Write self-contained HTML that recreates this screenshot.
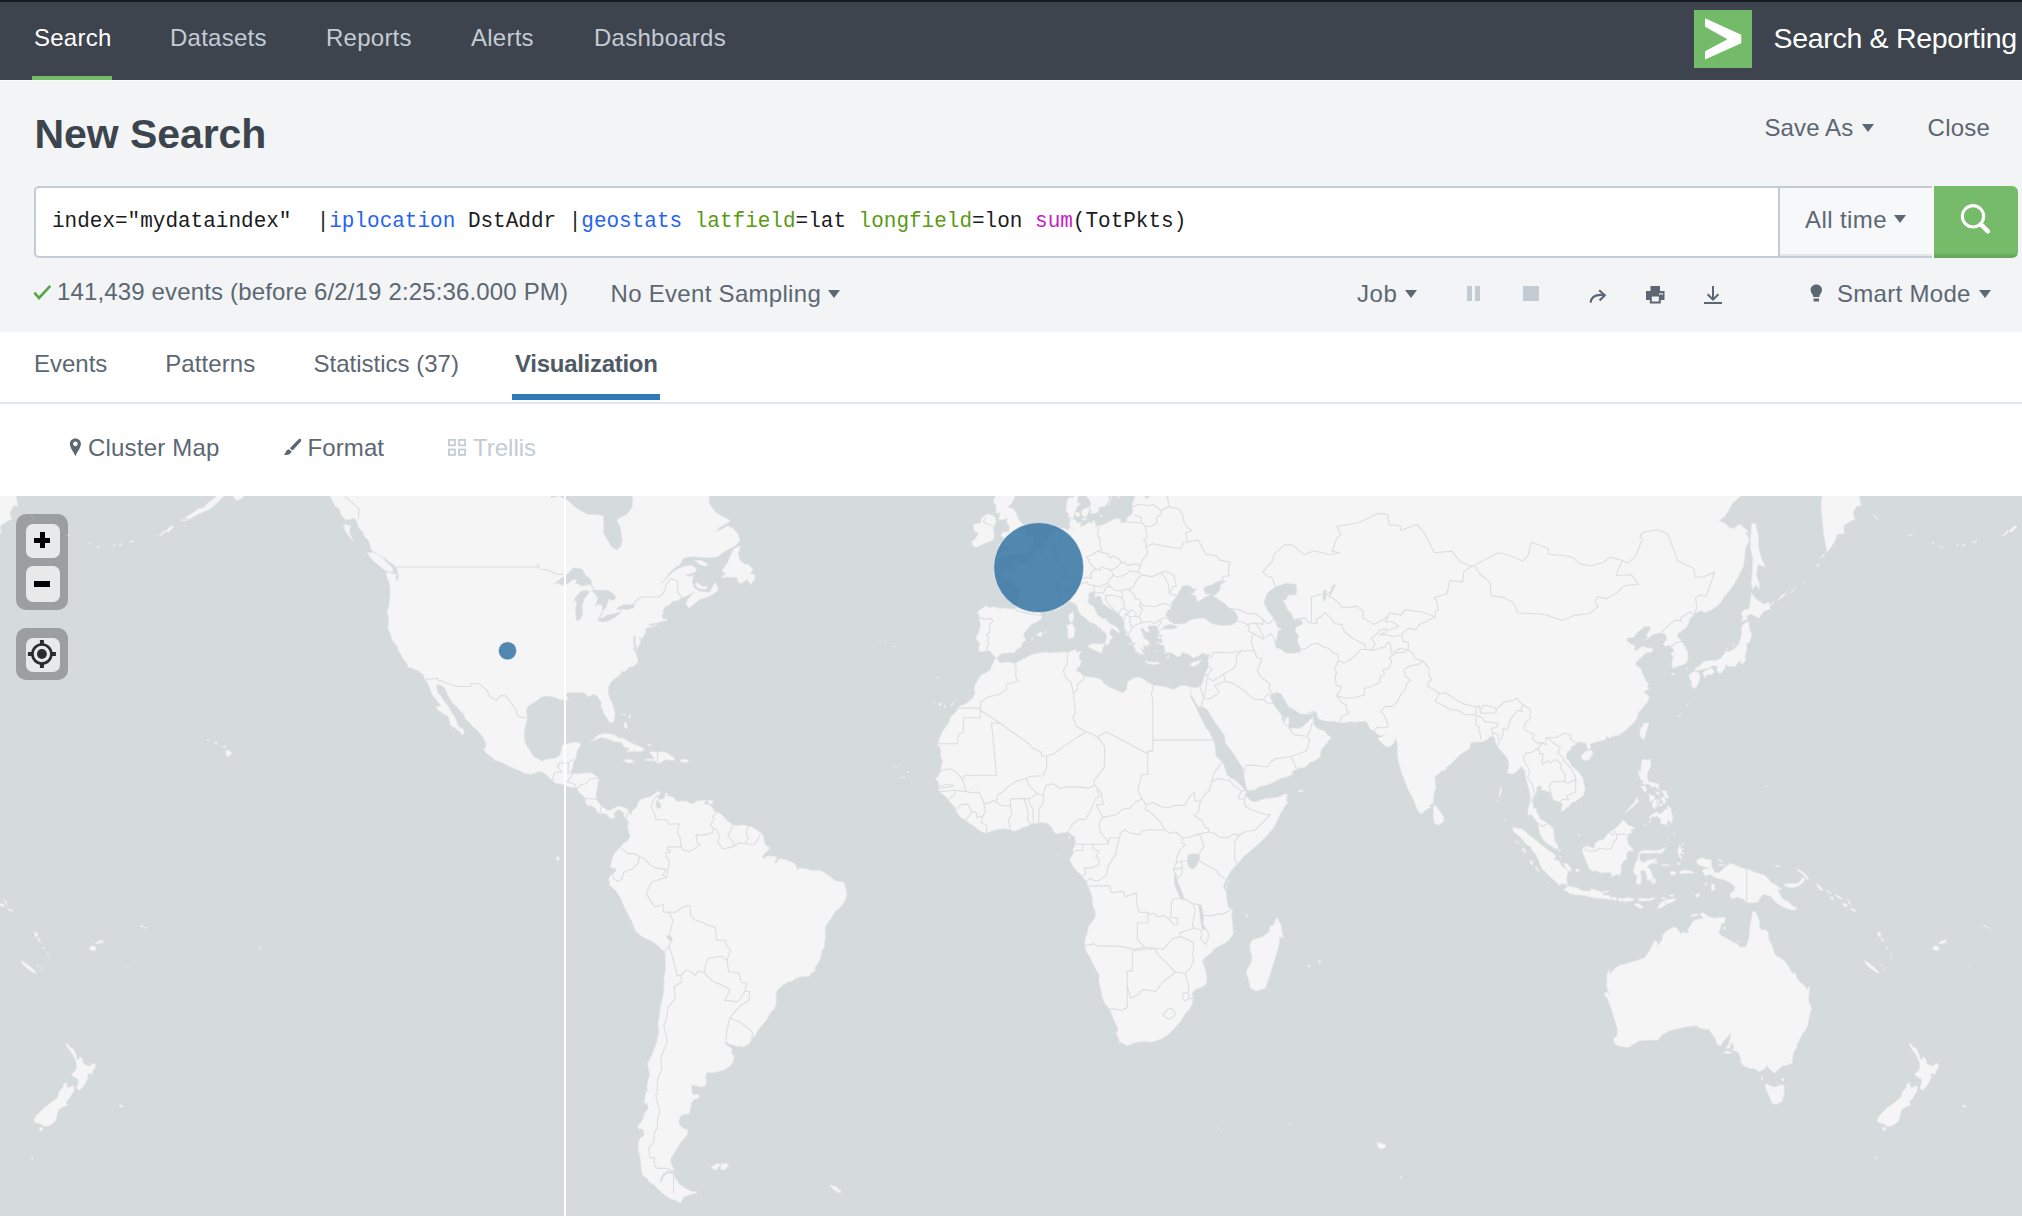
<!DOCTYPE html>
<html><head><meta charset="utf-8"><title>Search | Splunk</title>
<style>
*{box-sizing:border-box;margin:0;padding:0}
html,body{width:2022px;height:1218px;overflow:hidden;background:#fff;font-family:"Liberation Sans",sans-serif;color:#5c6773}
.abs{position:absolute;white-space:nowrap;line-height:1}
#topstrip{position:absolute;left:0;top:0;width:2022px;height:2px;background:#181c21}
#nav{position:absolute;left:0;top:2px;width:2022px;height:78px;background:#3d444d}
.nav{font-size:24px;color:#c3cbd4;top:26px;letter-spacing:.25px}
#hdr{position:absolute;left:0;top:80px;width:2022px;height:252px;background:#f2f4f5}
.t24{font-size:24px;color:#5c6773}
.caret{position:absolute;width:0;height:0;border-left:6.4px solid transparent;border-right:6.4px solid transparent;border-top:8.4px solid #5c6773}
#sbox{position:absolute;left:34px;top:186px;width:1898px;height:72px;border:2px solid #c3cbd4;border-radius:5px 0 0 5px;background:#fff}
#tsel{position:absolute;left:1780px;top:188px;width:152px;height:68px;background:#f7f8fa;box-shadow:inset 0 -2px 0 #e4e7ea}#tgap{position:absolute;left:1932px;top:186px;width:2px;height:72px;background:#f7f8fa}
#tsep{position:absolute;left:1778px;top:188px;width:2px;height:68px;background:#c3cbd4}
#sbtn{position:absolute;left:1934px;top:186px;width:84.3px;height:71.8px;background:linear-gradient(#75bb6a 0,#75bb6a 93%,#67a85e 97%,#67a85e 100%);border-radius:0 6px 6px 0}
#q{font-family:"Liberation Mono",monospace;font-size:21px;left:52px;top:209.5px;color:#1a1c20;transform:scaleY(1.07);transform-origin:0 0}
#q .b{color:#2663f2}#q .g{color:#5b9b14}#q .p{color:#c521c5}
#tabs{position:absolute;left:0;top:332px;width:2022px;height:72px;background:#fff;border-bottom:2px solid #e1e6eb}
#map{position:absolute;left:0;top:496px;width:2022px;height:720px;background:#d5dadd;overflow:hidden}
</style></head><body>
<div id="topstrip"></div>
<div id="nav"></div>
<div class="abs nav" style="left:34px;color:#fff">Search</div>
<div class="abs nav" style="left:170px">Datasets</div>
<div class="abs nav" style="left:326px">Reports</div>
<div class="abs nav" style="left:471px">Alerts</div>
<div class="abs nav" style="left:594px">Dashboards</div>
<div class="abs" style="left:32px;top:76px;width:80px;height:4px;background:#74bb69"></div>
<div class="abs" style="left:1694px;top:10px;width:58px;height:58px;background:#74bb69"></div>
<svg class="abs" style="left:1694px;top:10px" width="58" height="58" viewBox="0 0 58 58"><path d="M11.1 8.3 L47.3 24.8 L47.3 33.3 L11.1 49.6 L11.1 41.3 L33.4 29.2 L11.1 16.8 Z" fill="#fff"/></svg>
<div class="abs" style="left:1773.5px;top:24px;font-size:28.5px;color:#fff;letter-spacing:-.3px" id="appname">Search &amp; Reporting</div>
<div id="hdr"></div><div class="abs" style="left:0;top:80px;width:2022px;height:1px;background:#fbfcfc"></div>
<div class="abs" id="title" style="left:34.6px;top:114.2px;letter-spacing:-.08px;font-size:41px;font-weight:bold;color:#3c444d">New Search</div>
<div class="abs t24" id="saveas" style="left:1764.5px;top:115.6px;letter-spacing:.1px">Save As</div>
<div class="caret" style="left:1861.8px;top:123.6px"></div>
<div class="abs t24" id="close" style="left:1927.6px;top:115.6px;letter-spacing:.2px">Close</div>
<div id="sbox"></div><div id="tsel"></div><div id="tsep"></div><div id="tgap"></div><div id="sbtn"></div>
<div class="abs" id="q">index="mydataindex"&nbsp; |<span class="b">iplocation</span> DstAddr |<span class="b">geostats</span> <span class="g">latfield</span>=lat <span class="g">longfield</span>=lon <span class="p">sum</span>(TotPkts)</div>
<div class="abs t24" id="alltime" style="left:1805px;top:208px;letter-spacing:.4px">All time</div>
<div class="caret" style="left:1894.4px;top:215.4px"></div>
<svg class="abs" style="left:1950px;top:196px" width="52" height="52" viewBox="0 0 52 52"><circle cx="23" cy="20.3" r="10.65" fill="none" stroke="#fff" stroke-width="3.1"/><path d="M31.2 28.6 L37.9 35.4" stroke="#fff" stroke-width="4.5" stroke-linecap="round"/></svg>
<div class="abs t24" id="events" style="left:57px;top:279.6px;letter-spacing:.15px">141,439 events (before 6/2/19 2:25:36.000 PM)</div>
<svg class="abs" style="left:32px;top:282px" width="22" height="22" viewBox="0 0 22 22"><path d="M2.4 10.6 L7 16 L18.3 3.8" fill="none" stroke="#5aa548" stroke-width="2.6"/></svg>
<div class="abs t24" id="sampling" style="left:610.5px;top:282px;letter-spacing:.3px">No Event Sampling</div>
<div class="caret" style="left:828.4px;top:289.8px"></div>
<div class="abs t24" id="job" style="left:1357px;top:282px;letter-spacing:.6px">Job</div>
<div class="caret" style="left:1405px;top:290px"></div>
<div class="abs" style="left:1467px;top:286px;width:5px;height:15px;background:#c3cbd4"></div>
<div class="abs" style="left:1475px;top:286px;width:5px;height:15px;background:#c3cbd4"></div>
<div class="abs" style="left:1523px;top:286px;width:16px;height:15px;background:#c3cbd4"></div>
<svg class="abs" id="ishare" style="left:1588px;top:286px" width="20" height="20" viewBox="0 0 20 20"><path d="M2.6 16.6 C3.2 10.6 7.5 8.2 15.5 9" fill="none" stroke="#5c6773" stroke-width="2.2"/><path d="M11.2 4.2 L16.8 9.2 L11.6 14.6" fill="none" stroke="#5c6773" stroke-width="2.2"/></svg>
<svg class="abs" id="iprint" style="left:1646px;top:286px" width="19" height="18" viewBox="0 0 19 18"><path d="M4.5 0 H14 V5 H18.5 V14 H14.8 V17.6 H3.8 V14 H0 V5 H4.5 Z M5.8 10.6 V15.6 H12.8 V10.6 Z M13.2 7 V8.8 H14.6 V7 Z M15.4 7 V8.8 H16.8 V7 Z" fill="#5c6773" fill-rule="evenodd"/></svg>
<svg class="abs" id="idl" style="left:1703px;top:285px" width="20" height="20" viewBox="0 0 20 20"><path d="M10 1 V14.2 M4.6 9.2 L10 14.6 L15.4 9.2 M1 18 H19" fill="none" stroke="#5c6773" stroke-width="2"/></svg>
<svg class="abs" id="ibulb" style="left:1810px;top:284px" width="13" height="19" viewBox="0 0 13 19"><path d="M6.3 0.4 C9.6 0.4 12 2.8 12 5.9 C12 8.3 10.4 9.6 9.6 11.2 L9.3 13 H3.3 L3 11.2 C2.2 9.6 0.6 8.3 0.6 5.9 C0.6 2.8 3 0.4 6.3 0.4 Z M3.6 14.6 H9 V17.6 H3.6 Z" fill="#5c6773"/></svg>
<div class="abs t24" id="smart" style="left:1837px;top:282px;letter-spacing:.3px">Smart Mode</div>
<div class="caret" style="left:1978.5px;top:290px"></div>
<div id="tabs"></div>
<div class="abs t24" id="tab1" style="left:34px;top:352px">Events</div>
<div class="abs t24" id="tab2" style="left:165.2px;top:352px;letter-spacing:.1px">Patterns</div>
<div class="abs t24" id="tab3" style="left:313.5px;top:352px">Statistics (37)</div>
<div class="abs t24" id="tab4" style="left:515px;top:352px;font-weight:bold;color:#4f5a66;letter-spacing:-.28px">Visualization</div>
<div class="abs" style="left:512px;top:394px;width:148px;height:6px;background:#2d79b9"></div>
<svg class="abs" id="ipin" style="left:69px;top:438px" width="13" height="19" viewBox="0 0 13 19"><path d="M6.4 0.6 C9.6 0.6 11.9 3 11.9 6 C11.9 9.5 8.4 13.5 6.4 18.2 C4.4 13.5 0.9 9.5 0.9 6 C0.9 3 3.2 0.6 6.4 0.6 Z M6.4 3.6 A2.3 2.3 0 1 0 6.41 3.6 Z" fill="#5c6773" fill-rule="evenodd"/></svg>
<div class="abs t24" id="tb1" style="left:88px;top:436px;letter-spacing:.2px">Cluster Map</div>
<svg class="abs" id="ibrush" style="left:283px;top:438px" width="19" height="19" viewBox="0 0 19 19"><path d="M17.6 1 C18.4 1.6 18.4 2.6 17.8 3.4 L9.6 12.6 L6.8 10.2 L15.4 1.4 C16 0.8 17 0.6 17.6 1 Z M5.8 11.2 L8.6 13.6 C8 16.2 5 17.4 0.8 16.8 C2.8 15.6 2.6 12 5.8 11.2 Z" fill="#5c6773"/></svg>
<div class="abs t24" id="tb2" style="left:307.5px;top:436px;letter-spacing:.1px">Format</div>
<svg class="abs" id="itrel" style="left:448px;top:439px" width="18" height="17" viewBox="0 0 18 17"><g fill="none" stroke="#c3cbd4" stroke-width="1.8"><rect x="0.9" y="0.9" width="6" height="5.4"/><rect x="11.1" y="0.9" width="6" height="5.4"/><rect x="0.9" y="10.5" width="6" height="5.4"/><rect x="11.1" y="10.5" width="6" height="5.4"/></g></svg>
<div class="abs t24" id="tb3" style="left:473px;top:436px;color:#c3cbd4">Trellis</div>
<div id="map">
<svg class="abs" style="left:0;top:0" width="2022" height="722" viewBox="0 0 2022 722"><defs><g id="w"><path fill="#f5f5f5" stroke="#e7e9eb" stroke-width="0.8" stroke-linejoin="round" d="M181.0,24.6L189.2,23.2L193.8,20.6L198.9,17.9L204.1,15.6L208.7,13.8L213.8,10.1L218.9,5.0L224.0,-0.1L229.7,-4.9L235.3,-9.8L239.9,-15.7L244.0,-22.7L249.1,-18.6L256.8,-22.7L267.0,-29.8L331.0,-29.8L325.4,-8.8L329.5,-1.1L332.1,4.6L335.1,10.1L339.2,12.9L341.3,19.2L345.4,23.7L350.5,23.2L354.1,21.9L357.2,26.3L358.7,31.6L362.8,35.9L364.8,41.0L368.4,44.3L370.0,49.3L371.5,54.2L375.1,56.7L381.2,59.9L385.3,62.3L388.4,65.5L393.5,68.3L394.5,70.6L396.3,71.0L397.6,75.7L398.6,81.8L396.6,85.6L395.6,81.8L396.6,78.0L393.0,77.6L386.3,75.7L386.8,81.0L389.4,86.7L389.9,91.9L389.9,101.0L388.9,110.4L387.1,116.3L388.9,123.6L387.9,132.8L390.9,138.5L391.5,142.8L395.0,147.7L397.6,150.3L398.1,154.1L400.7,158.0L403.7,163.7L406.8,167.5L408.0,171.5L411.9,171.8L415.0,173.7L418.6,174.6L419.6,175.8L423.2,178.6L424.5,182.3L425.2,183.5L427.8,187.4L430.4,193.7L431.9,198.8L436.5,203.8L440.1,209.0L440.6,210.5L435.6,211.0L439.1,214.8L443.3,217.7L448.3,220.5L449.8,225.6L450.8,229.6L453.9,231.3L460.1,236.0L462.1,239.2L464.2,237.4L463.6,233.5L460.1,231.8L458.0,229.6L456.5,224.5L454.4,220.5L451.4,216.5L449.3,212.5L447.3,209.0L443.7,204.9L441.1,200.2L438.0,196.7L436.8,192.5L437.0,188.0L443.4,190.7L445.7,193.7L447.8,199.0L450.3,203.2L452.9,207.3L457.0,210.7L459.6,214.2L463.6,217.7L465.2,222.8L469.3,226.2L472.4,230.2L477.0,234.1L479.9,237.4L483.1,241.3L485.7,246.6L485.7,251.2L483.6,252.9L486.2,257.2L490.8,260.2L494.9,264.0L501.5,266.2L504.9,267.9L508.7,270.2L513.3,272.1L519.5,274.5L524.1,276.9L530.7,278.5L534.8,277.1L538.4,275.5L543.5,276.6L547.6,279.8L551.7,284.0L556.3,287.6L561.4,288.0L564.9,289.4L570.1,291.1L574.8,291.7L576.8,290.9L577.3,293.0L578.3,295.2L581.4,298.2L585.1,301.6L585.8,304.0L585.1,306.3L587.0,308.9L589.1,310.4L590.6,308.4L591.6,310.2L594.0,311.2L596.3,313.3L596.8,316.2L598.8,316.4L600.5,318.4L602.9,317.0L606.5,318.2L608.5,320.1L610.7,322.6L613.2,322.1L615.2,321.1L613.7,318.0L615.7,315.4L617.8,313.6L620.8,314.1L623.4,317.0L624.9,317.0L623.4,318.5L624.7,321.1L626.0,322.6L628.5,325.7L627.7,331.4L629.0,336.5L630.3,339.7L627.5,345.3L622.9,347.8L621.3,350.4L617.0,354.6L614.9,357.0L612.6,361.5L611.5,364.5L611.1,368.3L610.1,370.9L613.7,372.9L615.7,371.4L616.0,374.5L614.2,376.8L612.9,377.5L610.1,380.1L608.4,383.6L609.6,385.6L609.3,389.3L612.1,391.4L615.7,394.5L618.3,398.6L620.1,401.2L622.4,406.3L624.6,411.4L627.5,417.3L629.8,421.8L632.1,425.7L634.1,431.2L636.2,435.7L640.0,439.1L644.9,442.1L649.5,444.2L652.6,445.9L656.2,448.1L659.5,451.3L662.3,453.9L664.8,455.9L665.4,460.3L665.6,465.2L665.6,470.7L665.4,475.6L663.8,480.9L664.4,484.3L663.8,489.6L663.9,494.1L663.2,499.5L662.2,503.7L660.2,511.8L659.5,520.4L658.0,526.1L658.6,532.1L659.0,536.3L658.1,538.9L657.2,544.9L655.6,549.9L653.6,554.2L652.1,558.7L650.0,562.5L647.7,567.6L648.7,574.1L649.8,578.7L648.0,584.7L646.9,590.1L647.5,594.9L645.9,596.3L644.9,601.8L643.9,606.7L646.9,607.4L648.5,612.4L644.9,616.7L642.8,623.3L637.7,630.7L638.8,632.9L642.8,632.9L644.4,638.9L639.3,642.8L638.2,650.6L639.3,657.7L640.8,665.8L641.3,674.0L642.3,679.1L646.4,681.6L649.5,685.9L654.6,689.4L658.7,693.8L663.8,698.2L670.0,702.7L675.6,704.5L680.4,707.1L683.8,700.9L691.0,698.2L695.6,697.3L697.6,696.0L694.0,695.5L691.0,695.1L684.8,692.0L679.7,688.5L675.6,682.5L673.6,677.8L668.4,677.0L663.8,679.9L661.8,685.1L659.7,686.8L661.3,680.8L663.3,677.8L668.4,674.9L673.6,675.3L674.8,675.1L671.5,669.1L670.5,663.3L674.1,656.9L678.2,650.6L681.8,645.1L687.4,638.6L687.5,633.6L683.3,632.5L679.2,628.8L678.9,624.5L680.7,619.6L685.3,618.2L689.4,617.4L690.5,612.4L691.7,606.0L694.6,603.2L699.0,602.3L698.7,597.5L695.6,599.0L692.5,598.4L691.7,593.5L691.5,588.8L696.1,589.8L701.2,591.2L704.8,590.1L706.6,586.8L705.6,581.4L706.8,576.1L710.9,576.8L717.6,575.8L724.3,573.9L730.2,570.2L733.0,565.7L734.5,559.9L731.9,558.4L731.2,555.5L732.3,553.7L729.9,551.1L727.3,549.6L725.5,548.0L725.3,545.5L726.0,544.6L726.0,544.9L728.6,547.8L733.0,548.9L737.1,550.5L741.2,549.9L743.5,550.9L747.3,548.6L749.4,547.4L751.5,543.4L755.0,539.7L758.2,533.6L762.7,528.5L766.2,524.3L768.1,520.7L770.2,516.8L774.4,512.5L776.0,507.9L776.2,502.7L776.0,498.7L777.0,494.7L779.6,491.9L783.1,489.0L787.7,486.1L792.4,485.1L795.9,482.3L800.0,480.9L803.8,480.5L809.8,480.1L810.9,477.2L814.9,475.1L815.1,470.7L818.0,466.9L821.0,461.4L821.5,455.5L824.1,452.0L824.8,445.0L825.4,440.5L825.0,436.2L825.4,430.4L827.7,426.7L830.8,423.1L833.8,417.8L835.9,414.7L838.9,412.6L841.9,409.3L844.6,405.4L846.3,401.0L846.6,396.3L845.6,392.4L844.6,389.2L844.3,386.8L841.0,385.5L836.9,385.5L833.8,383.7L830.2,380.6L827.6,378.7L823.6,376.0L819.4,374.4L814.9,374.5L811.0,374.5L806.7,372.9L802.1,371.9L799.0,372.4L797.5,374.5L796.4,371.4L794.9,367.8L790.8,365.7L785.4,363.7L781.1,362.7L778.0,363.7L776.5,366.8L774.4,367.3L777.0,361.1L772.4,360.1L766.8,360.1L764.7,362.7L762.1,361.1L763.7,358.6L766.8,355.5L768.8,354.0L769.3,350.9L766.2,349.9L764.2,345.8L763.2,339.6L760.9,337.0L758.6,335.5L756.0,333.5L751.9,331.1L748.3,329.9L742.4,329.1L737.6,329.6L733.0,329.1L730.9,327.3L727.1,324.7L724.8,322.1L721.7,318.5L718.1,316.4L714.5,315.4L712.5,311.8L709.4,308.7L705.8,308.7L703.8,307.1L705.8,304.8L708.0,304.4L703.8,304.2L701.0,304.7L695.7,304.9L696.2,305.8L693.5,307.5L690.5,307.6L686.5,305.1L682.1,305.0L676.6,305.6L675.1,303.5L674.1,301.4L670.0,300.3L667.4,300.3L667.7,297.4L666.4,296.7L665.1,298.8L664.9,301.4L661.3,303.5L658.7,303.2L658.2,305.5L660.8,308.1L660.8,311.8L657.7,312.8L655.6,309.2L656.7,304.0L658.7,302.4L656.7,299.8L659.7,298.5L660.3,296.4L657.8,295.3L655.1,297.2L651.6,300.1L648.5,301.4L644.9,301.4L643.9,303.2L641.8,302.7L639.3,304.8L638.0,306.6L637.5,309.7L636.2,311.3L634.1,313.6L631.6,315.7L631.8,318.8L630.6,318.8L628.8,315.0L626.0,312.3L622.9,311.0L620.3,310.5L617.0,310.5L615.7,311.5L613.2,312.8L610.6,314.1L608.0,314.4L606.0,313.3L603.7,311.5L601.9,310.5L599.7,308.1L597.5,305.5L596.3,303.3L596.0,299.8L596.3,296.1L597.0,292.5L597.9,287.0L599.1,281.9L595.7,280.1L592.7,277.7L589.6,276.7L584.5,277.0L580.4,277.8L576.8,277.7L574.5,277.4L572.7,278.2L570.9,277.4L570.1,276.1L572.4,272.9L573.2,268.6L573.7,265.3L572.7,263.2L575.0,264.3L575.8,261.0L576.8,257.2L577.1,254.0L579.4,251.2L580.6,248.8L579.1,246.3L573.2,246.3L569.1,247.4L565.8,247.9L562.2,249.3L561.7,252.3L561.2,255.9L560.3,258.6L557.3,261.0L554.8,262.4L550.4,262.6L545.6,263.7L541.4,265.1L538.4,262.9L534.8,261.8L532.6,259.4L530.7,255.6L528.2,252.3L526.6,249.6L524.6,245.2L524.1,241.3L524.3,234.1L525.6,228.5L527.4,221.9L526.6,217.1L526.1,213.1L528.7,209.6L533.3,206.7L537.9,204.0L539.9,201.7L544.3,200.2L548.6,199.9L552.7,201.1L556.8,201.7L559.4,203.8L563.0,203.8L566.0,202.9L568.4,204.5L567.1,200.8L565.5,199.0L566.6,197.3L569.6,196.1L574.2,196.7L578.3,196.4L582.4,196.1L586.0,197.9L587.7,200.4L590.6,199.9L593.7,198.0L596.8,199.6L599.6,203.6L601.4,206.7L600.9,210.7L602.4,213.6L603.9,217.7L606.0,220.9L608.5,223.9L609.6,226.7L613.2,226.2L614.5,223.0L615.0,217.7L613.7,212.5L612.4,207.6L610.1,203.2L608.0,196.4L608.5,191.3L610.6,186.5L613.7,183.5L615.7,182.0L619.3,179.2L622.4,175.2L625.7,175.2L628.5,171.2L633.0,170.6L635.7,168.1L638.1,166.5L637.2,161.8L635.9,158.0L635.7,155.7L633.6,154.8L634.1,149.6L633.1,145.1L633.6,140.5L635.7,139.5L635.2,144.4L636.2,149.6L635.8,154.7L638.2,150.3L640.4,146.8L640.4,143.7L638.2,139.8L641.3,142.9L643.8,140.0L645.7,135.8L645.9,132.6L646.4,131.8L652.1,130.8L656.9,128.6L653.1,129.4L648.0,129.7L651.6,127.4L656.2,127.0L658.8,126.5L660.3,125.7L663.3,125.3L666.7,124.4L666.4,122.2L663.8,123.7L663.1,122.6L661.3,119.8L663.3,117.7L662.8,114.6L665.1,110.7L669.0,109.3L672.5,105.4L677.7,104.6L681.8,101.8L686.6,100.0L692.0,97.0L694.6,95.9L692.5,98.1L687.9,103.2L685.9,107.5L688.9,112.1L693.0,108.9L699.3,103.6L705.8,101.8L712.5,98.6L717.6,94.8L718.1,92.3L715.3,86.1L712.5,90.8L709.9,96.3L703.8,95.9L698.7,94.8L694.6,91.9L692.5,87.1L692.0,85.6L693.0,81.0L694.6,78.7L689.4,80.6L684.8,78.3L689.4,78.0L695.6,75.7L696.4,72.9L692.0,69.4L684.3,70.0L679.2,72.2L674.1,75.3L668.7,79.9L663.8,85.6L660.3,87.8L663.3,84.8L666.9,80.6L667.9,78.7L671.5,74.9L675.9,71.0L679.9,69.0L682.3,63.9L684.8,61.5L692.0,60.7L699.2,61.1L708.4,61.7L717.6,60.7L723.7,55.9L732.3,51.6L735.9,49.1L740.1,44.6L738.1,38.4L733.0,32.4L727.8,29.8L720.2,34.1L715.6,35.4L720.2,31.1L725.6,28.2L730.4,25.0L725.3,21.4L721.8,20.3L716.6,17.0L712.5,12.0L708.9,6.9L709.4,-2.0L704.3,-8.8L699.7,-18.6L694.6,-29.8L181.0,-29.8L181.0,-18.6L195.4,-15.7L205.6,-16.6L213.3,-15.7L221.0,-14.7L219.9,-8.8L218.4,-3.0L213.8,2.7L208.2,6.9L203.6,11.5L197.4,13.3L191.8,17.4L185.6,21.0ZM721.2,81.8L727.8,81.0L737.1,81.8L738.6,87.1L742.2,87.1L747.3,83.3L750.4,88.9L755.0,82.5L754.5,78.0L750.4,78.0L752.9,73.3L748.8,68.6L744.2,67.9L739.6,63.9L738.1,58.3L740.6,50.1L734.0,52.6L730.9,58.3L727.8,66.3L721.7,74.9L725.8,77.2ZM694.6,64.3L702.2,64.7L708.4,68.6L705.8,70.2L699.2,68.3ZM695.1,88.5L697.1,86.3L702.2,90.4L707.4,90.4L704.8,93.7L698.1,92.3ZM367.4,56.7L371.5,63.1L377.1,67.9L383.3,73.3L389.9,76.0L393.5,75.7L392.0,71.0L385.8,65.5L381.7,60.7L374.6,56.7ZM343.3,28.5L350.5,29.4L349.5,36.7L353.6,45.2L349.5,41.0L345.4,35.0ZM232.7,-0.1L236.3,4.6L241.4,2.7L245.0,-1.1L245.0,-5.9L241.4,-7.8L236.8,-4.0ZM589.9,244.9L593.2,243.8L598.3,239.1L603.4,237.5L609.1,237.7L613.7,238.5L618.8,241.9L623.9,242.4L629.0,245.7L634.1,248.2L637.7,249.6L641.3,251.2L645.2,253.7L640.8,255.6L634.7,255.2L627.0,255.9L629.5,252.3L624.4,251.2L621.3,246.3L614.2,245.5L609.1,243.3L605.0,241.9L600.4,241.6L595.2,244.1ZM643.6,264.0L648.0,264.8L654.6,264.8L657.7,267.2L660.8,266.4L663.8,264.5L666.9,263.5L673.1,264.8L674.8,262.4L671.5,260.2L666.9,256.7L661.8,255.6L657.7,256.4L652.1,255.3L649.0,256.7L652.6,259.9L654.4,262.9L648.5,262.9ZM623.6,264.5L626.0,263.2L631.1,263.7L634.7,265.9L631.1,266.7L627.0,266.7ZM680.5,264.0L684.8,263.2L688.7,264.3L687.4,266.2L681.0,266.2ZM707.9,307.9L712.5,307.4L712.7,304.0L708.9,304.5ZM624.4,226.5L626.5,226.8L627.5,231.8L626.0,233.0L623.9,229.6ZM620.8,218.5L626.0,217.7L626.0,218.5L620.8,219.1ZM629.0,218.8L630.6,218.8L630.0,222.2L629.0,221.9ZM647.5,248.8L651.0,247.9L650.8,249.6L648.0,249.9ZM225.8,256.4L226.8,253.7L230.7,255.6L232.0,257.8L227.9,260.8L226.3,258.9ZM222.5,250.1L225.1,249.9L226.1,251.2L223.8,251.8ZM214.6,246.6L216.1,245.7L217.4,247.7L215.3,247.9ZM206.9,243.5L208.7,243.0L208.9,244.4L207.6,244.6ZM711.5,670.7L717.6,667.4L720.7,668.2L716.1,674.0L712.5,672.4ZM721.2,667.8L726.3,667.4L729.1,669.1L725.3,673.2L720.7,674.0ZM829.7,689.4L835.4,690.3L841.5,696.0L838.9,696.9L832.8,692.9ZM556.3,361.1L558.4,360.6L559.4,363.7L556.8,364.7ZM1178.4,-29.8L1168.2,-21.1L1160.5,-22.2L1151.5,-21.1L1145.1,-18.6L1145.1,-14.7L1150.2,-10.5L1149.5,-5.9L1149.2,0.8L1146.7,3.0L1143.6,-0.1L1140.5,-4.4L1135.9,-2.5L1134.4,2.7L1132.3,7.4L1132.6,12.0L1132.8,14.7L1131.8,18.3L1127.2,21.4L1126.7,24.1L1124.1,26.8L1121.6,26.8L1120.0,25.9L1121.1,24.1L1119.0,22.8L1114.7,23.0L1109.3,25.4L1104.5,28.2L1097.8,30.5L1095.5,28.5L1094.7,25.4L1093.6,23.8L1091.9,27.2L1088.3,26.3L1086.8,28.2L1083.2,29.8L1080.6,30.3L1081.1,26.8L1076.8,26.8L1076.0,23.7L1073.2,22.8L1074.0,19.2L1074.5,16.5L1076.0,13.8L1077.0,10.6L1080.8,8.1L1077.5,6.4L1077.5,2.7L1078.8,-1.6L1079.1,-4.2L1075.7,-3.0L1072.9,1.3L1068.8,1.6L1066.8,5.5L1066.3,12.0L1066.2,16.1L1068.1,16.8L1069.1,21.9L1070.9,25.7L1068.8,26.8L1070.4,30.7L1073.4,33.3L1069.3,30.9L1068.6,33.7L1066.3,34.0L1065.2,32.0L1060.6,32.9L1061.7,35.4L1060.3,35.6L1056.5,35.0L1052.4,35.4L1049.1,38.9L1048.1,42.9L1045.8,47.0L1042.7,51.0L1041.2,52.4L1039.6,53.2L1036.9,54.7L1034.3,55.3L1032.9,56.1L1033.0,59.1L1032.7,61.5L1030.3,63.7L1025.3,67.1L1023.3,68.6L1019.2,68.0L1018.3,65.5L1016.5,65.9L1014.8,65.3L1016.6,72.3L1017.1,73.9L1014.6,73.7L1011.0,74.5L1009.4,72.2L1004.3,73.2L1000.4,76.2L1002.8,77.2L1000.6,78.5L1002.4,80.3L1007.5,80.9L1008.9,82.7L1012.0,84.0L1013.5,84.3L1014.6,88.5L1015.6,90.0L1018.9,92.6L1019.5,96.5L1021.2,100.3L1019.3,96.9L1018.4,103.6L1017.6,108.2L1016.8,111.9L1014.7,113.0L1009.2,112.7L1005.3,112.0L1000.7,112.5L995.8,111.4L994.8,110.7L988.7,111.4L985.5,109.8L981.8,112.7L977.3,116.1L979.7,120.8L979.6,124.3L980.4,128.0L980.0,131.4L979.4,134.8L976.7,140.1L976.2,143.9L978.2,144.4L977.6,146.2L980.3,146.4L979.4,149.3L978.7,155.3L984.2,155.4L989.2,154.1L992.5,158.4L996.1,161.8L997.4,161.0L1002.2,157.2L1006.8,157.2L1012.2,156.5L1013.6,157.2L1016.6,153.5L1019.8,151.6L1021.2,151.4L1022.3,146.7L1026.0,144.2L1023.2,139.5L1024.8,136.0L1029.3,131.0L1031.2,128.4L1036.0,126.5L1041.2,122.9L1041.8,120.0L1040.3,117.4L1040.7,114.6L1043.7,112.5L1048.4,112.8L1052.3,113.2L1055.2,114.6L1058.8,113.4L1062.0,110.4L1064.6,109.5L1068.2,106.1L1070.5,105.4L1075.1,107.5L1077.5,111.4L1078.7,115.8L1081.6,119.5L1085.1,121.5L1087.4,123.8L1089.4,126.0L1094.3,127.7L1097.8,130.2L1098.2,131.9L1100.4,131.3L1101.6,134.5L1104.7,135.8L1106.9,140.1L1105.8,144.9L1104.9,148.3L1107.0,149.5L1109.7,146.0L1109.9,143.6L1112.9,142.2L1109.4,137.5L1111.3,133.1L1113.0,132.6L1116.9,135.5L1118.9,137.1L1119.5,134.8L1116.7,131.4L1111.2,128.2L1106.3,124.8L1107.6,123.1L1103.1,122.8L1097.6,119.0L1094.0,110.9L1089.2,107.7L1087.7,105.2L1089.1,101.4L1088.0,97.9L1091.9,95.6L1095.3,96.3L1094.2,98.1L1095.7,102.0L1098.0,98.9L1101.1,101.2L1102.7,107.4L1106.2,110.1L1108.9,111.8L1114.0,114.9L1117.5,117.7L1122.6,121.5L1124.4,126.9L1124.5,132.6L1127.2,136.7L1128.6,139.1L1131.0,142.8L1132.8,146.7L1136.1,147.3L1133.0,149.4L1134.0,151.2L1135.8,153.8L1135.9,156.6L1138.0,155.3L1139.9,159.4L1140.4,156.9L1143.6,159.1L1141.5,151.8L1143.4,153.5L1145.1,152.5L1142.6,149.5L1145.8,149.4L1147.8,151.2L1147.7,148.0L1150.5,149.3L1148.4,144.9L1144.1,142.3L1142.3,140.1L1144.1,141.1L1142.0,136.5L1140.5,134.0L1142.2,131.6L1144.6,134.1L1146.4,136.3L1147.7,136.1L1149.7,134.9L1147.2,131.1L1149.8,129.5L1153.8,129.4L1157.3,130.1L1157.9,131.8L1158.9,135.5L1162.0,132.4L1165.6,129.3L1169.2,128.7L1173.2,128.7L1173.8,129.1L1173.3,132.4L1168.2,133.1L1163.0,133.1L1160.0,134.8L1158.3,139.3L1162.8,138.6L1161.4,140.5L1161.8,144.6L1163.7,146.2L1159.5,146.9L1161.5,149.0L1164.3,149.8L1164.4,153.3L1165.2,155.2L1164.9,157.5L1169.5,156.4L1173.8,157.9L1176.5,160.5L1180.4,160.5L1182.0,156.2L1188.6,158.3L1192.9,161.7L1198.6,160.0L1202.1,156.7L1205.9,158.3L1210.0,158.1L1208.9,161.3L1208.0,164.8L1208.5,168.7L1208.2,171.5L1206.6,174.9L1205.0,178.8L1204.0,181.5L1202.8,186.0L1201.2,189.5L1197.9,191.7L1194.3,191.9L1190.2,190.9L1191.5,198.8L1194.3,204.0L1196.9,208.8L1200.2,211.7L1201.5,207.3L1202.3,204.3L1203.8,201.2L1203.6,202.7L1202.7,207.8L1201.8,210.2L1207.6,213.9L1211.4,220.3L1215.6,227.2L1219.6,232.5L1224.6,239.7L1225.4,246.8L1231.0,254.2L1235.1,259.8L1238.8,265.9L1242.7,271.8L1244.2,277.1L1244.7,283.0L1246.2,290.8L1247.3,294.3L1251.1,294.3L1255.4,293.6L1258.8,290.6L1264.9,289.6L1271.5,287.3L1276.3,284.4L1281.8,281.9L1287.1,280.8L1292.2,278.6L1292.1,275.5L1297.2,272.9L1301.8,271.3L1304.9,271.4L1307.9,268.8L1309.2,266.5L1314.1,265.3L1320.8,260.5L1320.2,257.0L1321.8,252.9L1326.4,247.9L1331.0,241.2L1327.9,239.4L1324.8,235.1L1319.7,233.5L1315.4,230.9L1313.3,226.6L1312.9,220.5L1311.5,222.8L1307.8,225.8L1303.2,230.3L1299.2,232.4L1294.8,232.2L1289.0,232.7L1287.5,229.6L1289.0,227.6L1289.0,222.1L1287.0,220.8L1284.7,225.0L1284.6,228.7L1281.8,223.7L1281.4,219.2L1279.0,215.8L1275.2,211.3L1273.1,207.7L1270.5,202.2L1270.3,198.3L1273.1,198.6L1276.1,195.9L1281.7,198.2L1285.0,204.5L1288.5,210.7L1294.1,213.6L1299.7,217.4L1305.8,218.5L1309.5,216.2L1313.0,214.9L1316.6,216.5L1318.2,222.2L1320.6,223.7L1326.9,225.1L1335.2,225.6L1339.7,226.5L1343.9,226.7L1349.8,225.8L1355.7,226.2L1360.7,225.4L1365.8,225.1L1367.8,228.3L1370.4,233.5L1374.0,234.6L1376.5,237.3L1379.9,239.5L1384.7,238.8L1381.7,241.3L1378.4,241.5L1377.9,242.8L1381.2,246.1L1385.1,250.1L1388.2,251.2L1392.4,249.0L1394.5,245.4L1396.0,242.4L1397.0,246.0L1397.3,249.0L1397.7,252.9L1397.3,257.8L1397.6,260.8L1398.6,265.9L1400.1,271.3L1401.1,275.5L1402.7,279.5L1404.3,283.0L1406.2,288.3L1407.9,293.1L1410.3,297.7L1412.7,301.6L1414.2,305.5L1415.2,308.3L1416.5,312.3L1418.7,316.0L1421.9,318.1L1424.9,314.4L1428.8,312.0L1430.8,311.9L1429.3,309.7L1433.6,306.7L1433.6,304.1L1433.5,298.1L1435.9,292.0L1435.2,284.8L1434.9,280.3L1439.0,277.9L1440.3,275.7L1446.2,273.4L1445.9,271.5L1451.3,267.5L1455.4,263.2L1459.6,259.0L1464.2,256.1L1468.6,253.6L1470.2,250.7L1470.5,246.8L1473.1,246.2L1475.9,246.0L1480.5,246.0L1485.6,244.6L1488.2,243.0L1489.7,240.8L1492.8,240.2L1494.8,242.4L1495.7,247.2L1497.4,250.4L1500.4,254.2L1503.8,258.2L1506.1,260.5L1507.9,263.4L1509.0,268.1L1508.1,273.4L1507.1,276.6L1511.2,277.9L1514.8,277.1L1517.9,273.9L1521.4,270.2L1523.0,272.9L1524.6,274.0L1525.7,280.6L1527.1,286.9L1529.6,295.3L1530.4,300.8L1529.4,308.2L1528.1,313.3L1527.8,317.0L1528.1,319.5L1531.2,318.2L1533.7,322.1L1537.1,326.0L1538.6,329.9L1538.6,331.9L1539.9,337.9L1541.9,341.2L1543.7,344.2L1546.0,346.7L1548.3,348.3L1551.8,350.2L1554.7,353.1L1557.8,352.7L1558.7,351.7L1556.5,347.2L1554.5,344.2L1553.8,340.1L1554.2,336.0L1552.8,332.3L1550.1,329.6L1548.3,327.9L1546.1,326.6L1543.2,324.3L1539.9,322.6L1538.3,318.5L1536.8,316.4L1536.3,312.6L1533.5,312.6L1532.6,305.5L1534.2,301.9L1535.8,298.8L1536.5,294.7L1536.8,291.4L1539.9,289.8L1541.8,290.6L1541.3,292.8L1541.4,294.3L1543.4,294.2L1547.6,295.2L1549.6,296.5L1551.6,298.9L1552.7,302.4L1554.7,304.9L1558.2,305.0L1559.7,306.2L1562.8,308.1L1561.6,311.8L1561.0,315.4L1563.9,314.4L1566.1,312.0L1569.1,310.5L1571.4,306.6L1573.0,306.4L1575.7,305.3L1578.3,303.3L1582.9,300.1L1584.0,298.3L1583.9,296.4L1585.2,293.0L1584.1,288.4L1583.4,284.6L1582.4,281.3L1578.9,276.2L1575.7,273.7L1570.7,268.7L1569.6,265.3L1566.2,262.3L1567.0,256.4L1570.6,253.4L1571.4,250.7L1573.2,249.9L1577.8,246.8L1580.8,245.7L1583.5,247.0L1586.5,247.1L1586.7,250.4L1588.8,253.7L1590.6,251.8L1590.0,248.5L1593.1,247.1L1598.1,245.6L1602.3,244.6L1606.2,243.0L1606.4,239.9L1609.5,242.4L1612.6,240.5L1615.5,239.8L1619.2,238.8L1622.3,236.6L1625.9,234.1L1629.5,230.4L1632.5,228.0L1635.6,224.5L1637.4,221.1L1638.2,217.1L1640.7,214.2L1643.6,210.5L1647.4,206.4L1649.2,201.4L1647.4,198.5L1643.8,196.4L1646.1,194.3L1649.3,193.2L1646.9,190.1L1648.9,188.3L1646.4,185.3L1643.8,180.4L1641.8,175.5L1640.7,172.4L1636.4,169.6L1635.6,167.5L1636.9,165.6L1641.0,161.5L1643.8,158.6L1646.9,156.7L1652.0,156.1L1653.0,152.9L1650.1,152.1L1646.4,151.9L1643.0,150.1L1639.2,152.5L1636.6,154.8L1634.1,153.8L1635.4,150.6L1632.0,148.3L1629.0,147.0L1626.9,144.4L1627.7,141.8L1631.0,141.8L1634.1,141.1L1637.2,136.3L1640.7,133.8L1643.8,131.1L1648.9,130.1L1650.5,131.4L1649.7,134.1L1646.4,139.1L1647.9,141.8L1645.3,143.9L1647.4,143.1L1651.0,139.8L1654.6,138.1L1661.5,136.5L1665.8,138.5L1666.8,142.4L1666.3,144.3L1663.0,148.1L1665.8,150.6L1668.4,149.1L1670.9,150.6L1673.0,152.5L1674.0,155.7L1670.7,157.0L1672.5,160.5L1673.5,161.9L1672.0,166.2L1671.9,169.3L1672.5,172.4L1676.1,171.2L1678.9,169.8L1682.2,169.0L1685.6,167.5L1687.3,165.0L1688.1,161.6L1687.4,155.4L1685.0,150.6L1683.2,147.7L1681.2,144.1L1677.3,141.3L1678.1,136.9L1681.2,135.6L1686.3,131.3L1688.9,127.0L1689.4,123.6L1691.9,120.5L1694.0,120.2L1694.5,117.7L1700.1,114.6L1705.2,116.5L1710.4,114.6L1717.5,110.0L1721.1,105.4L1724.2,100.7L1728.8,95.2L1733.2,89.7L1738.0,81.0L1743.1,71.2L1744.4,63.1L1745.6,51.2L1749.3,45.2L1747.7,39.7L1745.2,37.1L1748.8,35.9L1743.1,30.7L1739.0,28.1L1733.9,32.4L1728.8,31.6L1726.2,28.1L1719.1,24.6L1725.2,20.1L1729.3,12.9L1732.2,7.6L1739.0,1.7L1744.2,-4.9L1750.3,-12.7L1757.0,-21.7L1767.2,-29.8ZM1827.6,-29.8L1826.6,-16.6L1823.5,-6.8L1821.5,2.7L1821.2,12.0L1822.0,21.0L1823.0,31.6L1824.0,40.1L1826.1,51.0L1827.0,56.1L1830.7,51.8L1835.3,44.3L1837.1,38.4L1844.3,37.6L1843.5,29.8L1850.1,25.4L1854.8,23.2L1853.2,16.5L1856.8,10.1L1860.9,10.1L1859.9,2.7L1858.3,-4.0L1860.9,-9.8L1864.5,-29.8ZM1751.8,27.2L1755.4,27.2L1758.5,40.1L1758.5,51.0L1761.1,61.5L1765.7,71.0L1758.0,68.6L1756.4,78.7L1759.5,87.8L1759.0,93.0L1755.9,88.5L1752.4,93.7L1751.3,86.3L1752.4,74.9L1752.9,63.1L1750.3,51.0L1750.8,38.4ZM1741.6,125.7L1743.1,120.2L1741.1,118.1L1744.2,113.2L1748.8,113.2L1750.3,106.1L1751.3,97.4L1756.4,103.2L1763.6,108.2L1768.7,106.1L1770.3,112.8L1764.1,115.3L1758.5,122.2L1751.3,118.1L1746.7,119.8L1747.2,123.6L1744.2,124.3ZM1746.2,125.7L1749.0,126.3L1749.3,132.4L1751.8,138.5L1749.8,145.7L1746.7,147.7L1746.5,155.4L1744.7,161.8L1746.0,163.7L1743.6,166.8L1740.8,168.1L1740.6,164.3L1737.5,166.8L1735.7,170.0L1732.4,170.6L1727.8,170.6L1725.7,168.1L1725.5,171.8L1722.7,174.9L1720.1,177.7L1716.5,174.9L1717.5,170.6L1713.4,169.6L1707.3,172.4L1702.2,173.7L1695.5,174.6L1695.0,172.1L1699.6,170.0L1704.2,165.3L1710.9,164.6L1717.5,164.3L1721.1,161.8L1724.7,157.3L1727.8,152.2L1726.2,154.8L1728.3,156.1L1734.4,152.9L1738.5,148.3L1741.1,141.1L1741.6,135.8L1741.1,131.8L1743.1,128.4ZM1702.7,177.4L1705.8,174.3L1711.9,172.1L1714.5,175.5L1711.9,178.6L1706.8,178.3L1705.2,182.0ZM1688.9,179.2L1691.9,176.5L1695.5,175.2L1699.1,176.8L1700.1,181.7L1697.6,189.5L1695.0,192.5L1691.4,190.7L1691.4,185.3L1689.4,182.3ZM1644.3,226.8L1648.9,227.3L1647.1,233.0L1643.8,244.1L1640.2,239.7L1639.7,234.6L1642.8,229.6ZM1581.3,259.4L1586.0,255.1L1591.6,254.5L1593.1,257.2L1589.5,263.2L1585.4,264.8L1581.3,262.6ZM1433.6,309.4L1435.9,310.2L1440.5,315.9L1443.9,321.6L1443.1,326.2L1438.0,329.1L1434.4,327.3L1433.1,321.1L1433.6,315.9ZM999.2,-13.7L1009.4,-13.7L1007.9,-6.8L1004.3,-3.5L1014.6,-4.0L1014.6,1.7L1011.5,7.4L1007.9,11.5L1012.0,12.0L1015.6,15.6L1017.6,21.0L1019.2,24.6L1023.8,28.9L1025.3,33.3L1026.3,37.6L1027.4,38.9L1031.5,39.3L1033.8,42.7L1033.0,46.8L1029.4,50.1L1032.0,52.6L1030.9,54.7L1026.3,57.1L1020.7,57.1L1015.1,58.3L1009.4,57.9L1006.4,61.1L1003.3,60.3L998.7,63.1L995.6,62.5L1001.2,56.7L1003.3,53.4L1009.4,53.4L1011.0,50.1L1004.8,50.6L998.2,48.9L1002.8,45.2L1004.3,41.8L1001.2,39.7L1002.8,35.9L1008.9,35.9L1009.4,30.7L1006.4,25.4L1007.9,21.9L1002.3,23.7L998.7,23.7L1000.2,16.5L996.1,17.4L996.1,9.2L993.1,5.5L995.6,-0.1L996.6,-6.8ZM993.1,19.2L986.9,17.9L981.3,22.8L980.8,27.2L973.6,28.1L974.1,35.0L978.7,37.1L976.2,41.8L971.6,46.0L973.1,50.1L976.2,51.4L982.3,48.5L989.5,45.6L993.1,44.3L994.1,38.4L993.1,31.6L996.1,26.3L995.1,21.9ZM1082.1,-16.6L1085.2,-6.8L1086.2,-0.1L1090.6,5.8L1090.3,9.7L1089.8,11.5L1091.4,15.6L1090.4,17.6L1095.6,17.1L1098.3,16.1L1098.0,12.6L1100.8,10.4L1104.7,10.6L1108.6,5.8L1109.0,0.1L1110.0,-4.4L1114.4,-13.7L1122.1,-24.7L1122.1,-29.8L1081.1,-29.8ZM1050.4,-29.8L1053.0,-19.6L1054.0,-12.7L1059.6,-7.8L1061.2,-6.8L1065.8,-8.3L1070.9,-13.7L1078.6,-19.6L1082.1,-16.6L1081.1,-29.8ZM1081.6,14.7L1085.2,12.4L1089.1,11.0L1089.3,14.7L1087.3,19.2L1085.2,21.4L1081.6,18.3ZM1075.0,16.5L1078.6,16.1L1080.1,18.3L1079.1,21.0L1075.5,20.1ZM1081.1,22.3L1085.7,22.3L1086.8,23.7L1083.2,24.6ZM1100.1,18.8L1102.1,18.8L1102.1,21.0L1100.1,20.6ZM1108.8,9.7L1112.4,-0.6L1111.6,-0.1L1109.0,6.4ZM1117.5,2.7L1121.1,-1.1L1122.6,-6.4L1119.5,-5.4L1118.0,-2.0ZM1136.9,-9.8L1138.5,-12.2L1143.6,-11.7L1142.6,-9.8L1138.5,-7.3ZM1138.0,-15.7L1140.5,-17.6L1142.6,-15.7L1140.5,-13.7ZM1036.8,138.5L1040.7,136.1L1042.5,137.8L1040.7,140.5L1038.1,139.8ZM1044.3,135.5L1046.8,136.1L1046.3,137.1L1044.5,136.5ZM1030.9,142.8L1032.7,141.8L1033.0,143.1L1031.5,143.4ZM1068.8,119.5L1072.9,115.3L1073.7,120.8L1072.4,126.3L1069.9,125.3L1068.8,122.2ZM1066.5,129.7L1071.9,127.4L1075.0,132.4L1074.0,141.1L1070.9,142.4L1067.8,141.8L1067.8,133.8ZM1088.5,149.3L1092.9,147.7L1101.6,148.0L1104.7,147.3L1102.6,152.9L1102.1,157.3L1098.0,155.7L1091.4,152.5L1088.5,151.6ZM1145.4,164.6L1149.2,165.9L1156.9,166.2L1159.5,166.5L1158.4,168.1L1151.3,168.4L1145.6,166.5ZM1190.2,167.8L1193.8,165.9L1201.7,164.0L1198.4,168.1L1193.8,170.6L1190.7,169.6ZM1166.9,160.8L1169.2,158.9L1168.7,161.5L1167.1,162.4ZM1157.4,141.1L1160.0,140.1L1161.0,142.1L1158.4,142.4ZM1157.4,145.4L1158.7,145.7L1158.4,147.7L1157.4,147.3ZM1129.2,147.0L1131.0,147.0L1131.0,148.3L1129.5,148.3ZM1125.4,137.5L1126.9,137.5L1127.7,139.8L1126.4,139.5ZM1154.6,154.5L1155.9,154.5L1155.6,155.7L1154.8,155.7ZM1297.7,295.1L1301.3,294.0L1303.8,294.8L1300.3,296.1ZM1283.1,220.5L1284.1,220.5L1283.9,222.5L1283.4,222.2ZM1307.9,218.2L1312.5,216.2L1313.1,216.8L1309.0,218.5ZM1190.2,190.9L1186.1,189.5L1180.4,189.5L1177.9,191.3L1173.3,193.4L1164.2,190.4L1153.6,189.2L1147.5,186.0L1143.1,182.9L1138.2,181.1L1133.9,182.0L1127.6,185.8L1126.7,190.7L1127.2,193.1L1123.1,196.9L1118.0,194.9L1109.8,191.3L1104.2,187.7L1102.1,184.2L1097.5,182.3L1092.3,181.1L1086.6,180.9L1082.7,179.2L1080.4,176.8L1076.5,175.0L1077.0,172.4L1079.9,169.8L1081.5,165.0L1079.2,162.9L1079.1,159.3L1081.4,154.9L1077.5,156.4L1075.3,153.6L1069.6,155.7L1064.6,156.1L1060.1,156.2L1054.3,156.6L1050.8,157.0L1045.3,156.1L1040.4,156.8L1031.5,158.5L1025.2,162.2L1021.6,163.7L1015.3,167.5L1009.7,166.2L1004.7,166.5L1000.7,166.8L997.7,164.5L997.7,162.4L994.5,163.2L993.3,166.8L990.8,172.6L989.7,174.2L985.8,176.8L981.3,178.9L977.4,184.7L974.8,189.5L974.2,194.7L975.5,196.0L972.7,202.1L966.8,207.3L958.6,210.6L956.2,215.4L950.7,220.9L948.5,227.3L943.1,234.6L941.3,238.5L939.4,242.4L937.5,250.1L939.3,250.1L941.3,256.1L940.3,258.9L942.7,265.5L941.3,271.3L940.3,276.4L937.8,280.8L935.0,283.2L937.9,285.0L939.0,288.3L938.8,291.4L939.0,294.8L941.3,297.7L944.9,299.8L948.0,303.5L950.6,306.6L954.7,310.7L956.9,316.0L958.8,319.0L960.8,321.6L965.9,324.4L969.5,327.3L973.3,329.4L978.6,334.0L985.3,337.2L990.9,335.3L993.7,334.2L999.2,333.2L1004.2,332.7L1009.4,333.5L1014.2,335.3L1015.8,334.5L1020.2,332.9L1023.8,331.1L1027.9,329.9L1030.9,328.2L1037.2,327.0L1042.2,326.6L1047.8,327.3L1050.4,329.9L1052.2,332.2L1053.5,335.5L1055.8,337.6L1059.1,337.3L1061.4,336.9L1065.8,336.3L1068.3,336.0L1070.4,337.6L1071.9,339.1L1074.5,340.6L1075.5,344.6L1074.8,350.1L1072.6,353.6L1074.0,356.5L1072.4,359.1L1069.8,363.3L1072.4,369.3L1075.5,373.4L1079.3,377.2L1082.1,380.1L1085.5,384.2L1087.3,388.1L1088.0,390.6L1090.3,395.0L1091.9,399.9L1092.5,404.8L1092.4,409.3L1095.2,414.9L1095.5,419.4L1094.1,423.3L1091.4,426.7L1088.8,429.9L1087.8,434.1L1087.0,438.4L1085.5,441.5L1084.9,445.8L1085.0,449.3L1086.2,455.7L1089.8,460.7L1092.9,467.4L1096.2,473.8L1099.2,478.9L1098.9,486.2L1100.8,493.6L1102.4,501.3L1105.2,507.9L1109.0,512.7L1111.2,516.3L1113.2,522.5L1115.9,528.5L1118.5,533.2L1116.2,537.7L1118.5,541.2L1119.1,544.4L1119.4,547.1L1121.1,545.5L1121.2,547.3L1123.4,547.5L1127.2,550.1L1132.3,547.4L1138.1,546.0L1144.5,545.2L1151.9,546.1L1155.9,544.7L1162.5,542.4L1167.6,538.9L1172.3,534.5L1176.1,530.5L1180.7,525.2L1183.7,520.0L1186.6,516.0L1189.0,513.7L1191.5,509.8L1193.2,502.4L1191.7,497.4L1193.8,494.7L1197.1,493.0L1202.0,490.7L1205.0,489.0L1206.6,486.8L1206.6,480.7L1205.6,475.1L1204.0,469.6L1202.5,466.3L1203.2,463.2L1207.1,459.8L1211.5,456.4L1214.2,452.8L1220.1,449.4L1225.6,446.7L1229.1,443.8L1233.3,437.5L1233.1,434.9L1232.3,426.6L1231.4,418.1L1232.8,414.6L1230.5,412.5L1228.2,411.1L1227.1,405.5L1226.5,399.7L1225.9,394.6L1223.5,391.9L1223.7,388.8L1225.0,385.6L1227.9,380.4L1230.2,376.1L1234.2,371.2L1237.8,367.8L1242.7,361.5L1248.5,356.5L1257.0,349.2L1263.9,342.7L1269.0,337.0L1273.3,332.2L1276.7,325.7L1279.9,318.6L1283.9,311.8L1288.0,305.9L1286.2,305.5L1287.4,298.6L1284.6,297.9L1280.3,300.3L1276.6,301.5L1271.6,302.0L1265.4,302.4L1260.3,304.2L1255.3,305.9L1251.1,305.0L1247.4,301.1L1245.7,299.8L1243.4,300.1L1246.4,297.9L1245.5,294.6L1243.6,292.5L1239.8,288.3L1234.5,283.6L1230.6,281.9L1226.9,278.7L1225.5,273.9L1222.4,265.9L1218.3,262.6L1215.9,259.9L1215.4,257.1L1215.0,250.1L1213.7,244.6L1212.4,242.9L1208.1,233.5L1206.4,233.5L1203.5,226.9L1200.3,221.1L1198.6,217.4L1196.8,212.5L1194.2,208.1L1192.0,203.8L1190.4,200.2L1191.5,198.8ZM1277.1,421.2L1280.8,428.7L1282.2,436.8L1283.1,440.5L1282.0,442.5L1279.4,439.6L1279.6,443.5L1278.8,449.0L1277.7,454.1L1274.7,463.6L1272.4,470.9L1269.7,479.7L1267.5,486.2L1265.4,492.0L1261.3,493.6L1255.9,495.3L1250.3,492.0L1248.4,482.6L1246.2,476.8L1246.9,473.7L1249.6,469.6L1251.5,465.7L1252.1,460.3L1250.2,453.7L1249.8,449.6L1252.4,443.7L1256.8,442.6L1262.0,441.1L1266.0,438.4L1269.4,435.3L1270.0,430.4L1274.1,428.8L1275.2,424.6ZM1225.5,389.1L1226.3,389.3L1227.3,391.9L1226.3,392.7ZM1227.8,384.7L1228.8,384.7L1228.6,387.3L1227.8,387.0ZM1307.7,469.3L1309.5,469.1L1310.5,470.7L1309.0,471.8ZM1318.4,465.2L1320.2,464.1L1320.7,466.1L1318.7,466.9ZM1246.2,418.4L1247.3,418.4L1247.5,421.0L1246.5,420.7ZM1068.1,340.6L1070.4,340.4L1069.3,343.0ZM1058.1,357.6L1059.4,358.1L1058.3,359.3ZM938.3,208.1L942.1,207.0L940.3,209.9ZM943.9,209.6L946.0,209.6L945.7,211.6L944.2,211.3ZM953.1,206.1L953.9,207.3L951.6,209.9L950.8,209.6ZM954.1,204.0L955.9,203.2L955.7,204.6ZM932.9,205.5L933.9,205.5L933.7,207.3ZM936.5,181.7L939.3,181.7L938.8,182.6ZM892.4,149.9L896.0,150.3L894.2,150.8ZM878.9,145.7L881.4,146.0L879.9,146.5ZM884.8,144.1L886.3,144.4L885.5,144.7ZM903.2,280.6L904.7,281.4L904.2,282.4L902.9,281.6ZM895.3,270.7L896.8,270.5L896.3,271.5ZM907.0,275.5L908.6,275.8L907.8,276.6ZM899.4,282.2L900.4,281.9L900.1,282.7ZM1377.1,645.9L1381.2,647.4L1385.8,649.0L1384.7,652.1L1380.1,652.9L1377.6,650.6ZM1400.1,680.8L1402.7,681.2L1401.1,682.5ZM1289.0,628.0L1290.5,628.4L1289.5,629.2ZM1217.3,631.8L1219.1,632.1L1217.8,632.9ZM1512.7,331.1L1517.3,332.4L1522.2,332.9L1526.6,336.5L1530.1,340.1L1536.0,344.2L1538.8,346.8L1540.9,348.6L1544.2,351.0L1548.6,354.5L1552.2,356.5L1555.7,359.6L1554.7,363.7L1559.3,365.0L1561.9,370.4L1565.5,371.9L1567.8,376.2L1566.8,381.1L1567.0,389.3L1563.9,387.8L1560.1,388.1L1558.8,389.9L1556.8,386.3L1552.2,382.7L1548.3,379.1L1545.0,375.5L1541.9,372.4L1539.9,368.3L1538.6,364.5L1535.8,358.6L1532.2,354.5L1530.6,350.7L1525.5,347.8L1522.5,343.0L1516.9,338.4L1513.2,335.0ZM1563.4,394.5L1567.0,390.4L1567.5,389.9L1571.9,390.9L1577.2,391.7L1580.8,394.0L1583.4,394.8L1590.0,395.3L1591.6,392.7L1594.9,394.0L1598.5,395.0L1602.1,396.6L1604.4,399.4L1608.5,399.1L1610.5,400.7L1611.0,404.6L1605.9,402.8L1600.8,402.8L1593.1,402.0L1588.0,400.2L1582.9,399.2L1580.8,399.1L1575.2,399.1L1570.1,397.6L1566.0,394.8ZM1601.8,395.8L1608.0,395.0L1609.0,395.5L1605.9,396.8L1602.1,396.6ZM1586.2,348.9L1589.8,350.9L1594.1,352.4L1595.2,347.3L1598.8,344.7L1603.5,343.4L1608.4,337.0L1613.1,334.0L1615.6,331.9L1619.1,328.9L1622.6,323.9L1625.4,325.7L1627.4,328.8L1629.5,329.6L1635.1,332.4L1630.5,333.8L1632.0,336.6L1628.4,337.8L1626.9,342.7L1628.4,348.3L1634.0,354.5L1627.9,355.5L1626.4,358.9L1626.7,362.7L1623.0,366.1L1620.8,369.8L1621.3,375.0L1619.7,379.6L1617.7,378.0L1611.8,380.9L1611.3,376.8L1605.9,376.5L1600.8,377.0L1596.7,374.7L1592.6,375.2L1589.0,372.4L1588.0,369.1L1586.0,364.7L1583.9,359.9L1582.4,355.5L1582.9,351.9ZM1664.0,351.9L1665.8,351.2L1662.2,357.3L1654.8,357.0L1646.9,357.3L1640.7,357.0L1639.5,360.6L1639.7,363.7L1643.0,366.8L1645.3,365.7L1647.4,364.2L1652.5,363.4L1656.1,362.7L1656.9,364.5L1651.0,367.8L1647.4,369.8L1651.5,376.0L1652.5,379.9L1654.0,382.4L1651.5,384.2L1647.4,384.2L1646.9,380.4L1644.3,373.9L1640.2,375.0L1641.2,379.1L1641.2,382.9L1640.7,388.3L1636.6,388.1L1636.1,385.9L1637.2,380.1L1634.1,377.5L1633.6,373.3L1635.6,366.3L1637.9,363.4L1638.2,359.6L1639.2,356.0L1643.3,354.2L1648.9,354.2L1656.1,354.7L1661.2,353.5ZM1696.8,364.1L1701.7,361.6L1706.8,363.4L1711.4,364.0L1711.4,369.8L1714.5,376.5L1718.6,376.9L1725.2,370.9L1730.8,367.3L1735.2,369.1L1740.6,371.6L1745.2,372.7L1748.3,373.3L1753.6,375.7L1760.3,377.9L1764.9,379.3L1768.2,382.7L1771.3,386.4L1776.4,389.3L1781.8,393.5L1777.4,394.1L1780.5,399.4L1783.6,403.8L1789.2,406.1L1791.8,409.5L1797.3,412.3L1795.1,414.2L1792.3,414.2L1785.1,412.1L1778.2,408.3L1774.9,405.4L1771.1,400.5L1766.2,398.9L1763.1,398.6L1760.0,401.7L1758.0,405.9L1752.9,406.9L1746.7,406.5L1743.4,403.3L1737.5,401.2L1731.4,402.8L1729.8,397.6L1734.4,395.0L1734.9,390.4L1731.9,388.1L1726.2,384.7L1723.7,383.7L1717.0,382.4L1711.9,379.6L1709.6,378.3L1705.2,380.1L1702.2,374.6L1703.7,373.4L1710.4,371.9L1704.2,370.9L1700.6,369.8L1697.1,367.3ZM1642.3,263.2L1647.6,264.0L1650.2,262.9L1651.0,269.6L1647.4,276.6L1647.4,281.9L1647.6,283.2L1649.4,286.1L1654.6,286.7L1659.2,288.3L1658.4,291.7L1660.2,294.8L1657.6,293.0L1654.0,289.6L1652.5,291.7L1648.9,287.7L1644.6,288.5L1642.3,287.7L1644.1,284.3L1641.8,284.8L1640.5,283.0L1638.7,277.7L1638.2,274.7L1640.7,276.3L1640.7,273.4L1641.2,268.3ZM1649.8,324.2L1650.0,319.5L1654.6,317.2L1656.4,315.4L1658.7,318.0L1660.7,317.5L1663.0,315.9L1664.8,313.3L1667.4,313.3L1667.4,309.2L1670.9,312.3L1671.7,317.5L1673.0,322.1L1670.9,327.3L1668.4,324.2L1668.1,323.2L1666.8,328.8L1668.4,330.9L1665.6,328.3L1660.7,327.8L1660.7,322.6L1657.1,320.6L1656.9,319.5L1654.6,321.3L1652.5,320.1ZM1661.2,294.8L1666.3,294.8L1668.6,302.4L1664.8,301.9L1663.8,298.2ZM1661.5,300.8L1664.8,301.4L1665.8,307.1L1663.5,307.6L1661.7,303.5ZM1651.7,308.4L1654.0,303.5L1657.4,303.7L1655.3,313.1L1652.5,311.3ZM1648.9,298.2L1654.0,300.1L1655.1,301.9L1652.0,304.8L1649.2,305.8L1649.7,301.4ZM1656.1,311.0L1657.9,306.6L1659.9,301.6L1658.9,307.1L1656.9,311.0ZM1658.7,309.7L1660.7,307.4L1662.8,308.1L1661.7,310.0ZM1640.7,290.1L1645.3,290.1L1646.9,294.0L1645.3,296.7L1643.3,294.0ZM1624.9,316.7L1629.0,312.3L1634.1,306.6L1637.2,300.8L1638.4,305.5L1633.1,310.7L1626.9,315.9ZM1655.6,295.1L1659.2,296.7L1659.9,298.5L1656.1,297.7ZM1657.1,412.6L1659.7,407.7L1664.8,404.1L1672.5,402.8L1676.6,402.8L1673.0,405.9L1666.8,407.9L1661.7,411.8ZM1638.2,402.8L1642.3,402.0L1648.4,403.0L1654.0,401.2L1654.6,402.8L1649.4,405.1L1642.8,405.1L1638.4,404.8ZM1622.6,402.8L1626.9,401.5L1630.5,402.2L1635.1,403.0L1633.6,404.6L1628.4,405.4L1623.1,406.1ZM1618.0,402.8L1620.8,401.7L1622.3,403.5L1621.0,405.6L1618.5,404.8ZM1610.8,401.5L1614.6,401.0L1617.2,402.8L1614.6,404.8L1611.6,402.8ZM1634.1,408.2L1638.7,407.4L1643.6,411.1L1640.2,412.6L1635.1,409.8ZM1668.9,398.9L1674.0,398.6L1673.5,400.2L1669.4,400.2ZM1661.2,401.7L1665.3,401.5L1665.3,402.8L1661.7,403.0ZM1695.5,399.1L1699.1,396.6L1699.1,400.2L1696.5,401.7ZM1711.4,387.8L1714.5,388.3L1715.0,393.5L1711.9,395.0ZM1705.2,386.8L1706.5,386.8L1706.3,389.9L1705.0,389.3ZM1677.6,354.5L1679.9,348.6L1680.7,352.9L1684.3,351.9L1680.9,355.2L1684.8,358.1L1680.2,357.6L1682.2,364.0L1679.1,361.1L1678.1,357.6ZM1679.6,375.5L1685.3,373.9L1690.4,374.7L1695.0,377.3L1689.9,377.0L1683.7,377.5L1680.2,377.5ZM1669.9,376.0L1673.5,375.2L1676.1,376.5L1675.0,379.1L1670.9,378.8ZM1676.6,366.8L1680.2,366.8L1680.2,368.3L1677.1,368.3ZM1661.7,368.3L1669.9,368.6L1669.9,369.6L1662.2,369.8ZM1718.6,363.4L1721.6,364.2L1722.7,365.7L1719.6,365.5ZM1718.0,368.0L1725.2,368.6L1725.2,369.3L1718.6,369.1ZM1563.2,367.8L1567.0,367.3L1571.1,372.4L1571.1,375.5L1567.5,374.5L1565.5,370.4ZM1575.7,372.9L1578.8,372.9L1579.3,375.5L1576.2,376.0ZM1522.0,352.4L1524.0,351.9L1526.0,356.3L1524.5,356.8ZM1529.6,364.7L1531.7,364.5L1533.2,368.3L1531.2,368.8ZM1514.8,345.3L1516.3,345.3L1518.9,347.3L1517.9,347.6ZM1534.8,370.4L1536.8,371.4L1539.4,376.0L1537.8,375.5ZM1547.6,386.8L1549.1,387.0L1548.6,387.8ZM1559.3,360.1L1560.9,360.1L1560.9,362.2ZM1558.8,353.7L1560.4,353.5L1560.4,355.2L1559.1,355.0ZM1577.8,339.1L1579.8,338.6L1579.3,340.6ZM1652.5,383.2L1655.6,382.2L1655.6,386.8L1652.5,388.3ZM1651.0,383.7L1652.8,383.4L1652.5,386.8L1651.0,386.8ZM1653.5,366.3L1657.1,365.7L1657.1,367.5L1654.0,367.8ZM1681.2,348.8L1683.5,346.5L1683.7,348.8ZM1666.8,342.2L1668.1,340.9L1667.9,342.4ZM1673.5,339.1L1674.5,336.5L1674.5,339.1ZM1648.4,325.7L1651.0,325.5L1650.5,326.5ZM1643.8,328.8L1646.4,328.8L1645.9,329.3ZM1784.1,388.3L1787.7,387.8L1792.8,387.5L1797.4,387.5L1800.5,384.7L1803.0,380.9L1805.1,382.7L1803.0,386.8L1797.9,390.4L1791.8,391.9L1784.6,389.9ZM1796.6,372.9L1800.5,374.5L1805.1,378.0L1808.7,382.2L1807.6,384.2L1804.1,379.6L1799.5,376.0L1796.9,373.9ZM1775.4,369.8L1779.5,369.8L1779.0,370.9L1775.9,370.9ZM1816.4,387.3L1819.9,389.9L1823.5,394.2L1819.9,394.0L1817.4,390.4ZM1825.6,393.7L1828.6,395.0L1831.7,397.6L1828.6,397.1ZM1829.7,400.7L1832.7,401.2L1833.8,403.8L1830.7,402.8ZM1834.8,398.1L1838.9,400.2L1843.5,403.3L1839.9,402.8L1836.3,400.4ZM1842.0,407.4L1846.0,407.7L1848.4,410.3L1844.0,410.3ZM1846.8,402.5L1849.1,404.8L1851.2,409.5L1848.6,406.9ZM1850.7,412.4L1854.2,413.4L1856.3,415.5L1852.2,414.7ZM1877.5,435.7L1880.4,437.0L1881.1,440.5L1878.3,440.5ZM1880.9,442.1L1882.4,442.6L1883.9,445.5L1881.9,445.5ZM1885.7,451.2L1887.8,451.2L1887.5,452.5L1886.0,452.5ZM1890.1,456.8L1891.6,457.1L1891.1,458.7ZM1891.4,460.6L1892.6,461.4L1891.9,462.2ZM1864.2,464.4L1868.6,466.9L1874.2,471.3L1879.8,476.8L1876.8,476.8L1871.1,472.9L1866.0,468.5ZM1880.4,468.2L1881.9,469.1L1881.4,470.4ZM1883.9,471.8L1885.5,472.1L1884.7,473.2ZM1932.3,452.0L1934.6,449.8L1938.2,450.1L1939.7,453.0L1937.2,454.9L1933.1,454.1ZM1938.7,446.9L1942.8,444.5L1946.4,443.7L1945.9,445.8L1942.3,447.7L1939.2,447.9ZM1945.6,446.6L1946.7,446.9L1946.1,447.9ZM140.1,429.6L142.6,429.1L143.1,430.7L141.1,430.9ZM143.9,431.2L146.7,431.5L147.0,432.3L144.4,432.0ZM127.0,470.2L128.5,470.2L128.3,471.0ZM258.8,450.9L260.4,450.9L261.2,452.5L259.4,452.2ZM1754.6,414.7L1752.4,416.3L1751.1,424.9L1749.8,431.5L1749.3,437.3L1748.8,442.6L1746.0,450.6L1740.6,451.2L1736.5,447.4L1731.4,445.3L1726.2,442.1L1721.1,439.4L1718.6,436.8L1720.6,432.5L1721.1,428.3L1724.2,426.7L1725.7,423.1L1724.2,421.0L1720.6,421.5L1716.0,422.0L1711.9,421.8L1707.8,419.9L1703.7,416.8L1699.6,417.8L1703.7,422.5L1700.1,422.8L1694.8,423.9L1691.9,426.7L1690.4,429.4L1687.8,433.3L1688.4,436.8L1685.3,436.8L1682.2,436.2L1680.7,438.4L1679.1,434.6L1674.8,430.7L1669.9,433.1L1665.8,435.2L1662.8,438.9L1661.7,444.2L1657.9,449.6L1657.1,445.8L1654.2,444.7L1650.6,453.0L1648.4,456.0L1644.3,462.0L1638.2,464.1L1632.0,465.8L1624.9,468.0L1618.7,469.6L1614.1,473.2L1610.0,477.9L1609.2,474.0L1606.9,478.4L1606.9,484.0L1606.7,491.3L1609.5,498.7L1606.4,495.8L1604.1,498.4L1608.0,503.3L1609.2,507.3L1611.6,513.6L1613.6,520.7L1615.6,526.7L1617.4,532.4L1617.2,535.7L1616.8,540.8L1613.6,542.0L1614.3,547.2L1618.7,550.2L1628.4,551.4L1634.1,548.0L1639.7,544.6L1648.9,544.1L1657.1,544.3L1659.2,542.4L1662.2,538.8L1669.9,534.5L1677.6,532.7L1684.8,530.9L1690.4,530.3L1696.3,529.7L1700.6,532.7L1709.1,533.6L1711.9,537.5L1715.5,542.7L1717.0,548.0L1720.5,550.2L1723.7,544.9L1729.3,538.9L1730.2,535.7L1730.8,540.0L1729.3,544.5L1728.5,548.0L1725.7,553.0L1730.1,552.1L1730.8,548.6L1731.9,546.4L1733.9,550.5L1731.9,554.9L1734.4,554.6L1738.5,556.8L1740.8,562.7L1740.3,564.9L1743.1,569.6L1745.2,570.5L1749.8,572.5L1754.4,572.8L1759.5,575.8L1765.4,572.2L1766.9,569.3L1768.7,572.2L1771.8,574.8L1774.4,577.6L1777.4,574.1L1782.6,569.6L1787.7,568.9L1792.6,567.0L1792.3,564.2L1793.8,555.5L1796.9,551.7L1797.4,547.5L1799.5,544.0L1802.0,538.3L1805.6,533.9L1807.8,529.3L1808.9,522.5L1811.4,512.7L1810.4,509.0L1808.9,505.6L1808.7,501.3L1809.7,491.9L1809.2,490.2L1807.4,493.6L1805.1,490.5L1799.5,485.4L1796.6,481.4L1795.4,477.3L1791.8,476.8L1788.7,470.4L1783.8,464.1L1776.5,460.1L1773.9,456.0L1772.6,450.6L1771.2,447.5L1769.5,445.3L1768.5,439.8L1768.7,437.0L1764.6,433.1L1761.6,434.6L1759.5,430.9L1759.5,425.7L1758.0,421.5L1756.2,417.3ZM1765.7,588.1L1768.7,589.1L1774.1,591.3L1777.4,590.1L1782.3,588.4L1784.1,590.1L1784.1,598.4L1782.6,603.2L1782.3,605.3L1776.7,608.3L1772.6,607.8L1771.8,606.0L1768.7,599.0L1768.2,598.4L1765.7,591.5ZM1723.9,555.8L1727.8,554.9L1731.9,556.5L1728.8,557.7L1724.2,557.4ZM1692.4,418.4L1697.1,417.6L1698.1,419.4L1693.5,420.4ZM1690.4,418.9L1692.4,418.4L1692.4,420.7L1690.9,420.4ZM1723.2,431.2L1725.7,430.9L1725.2,433.3L1723.4,433.1ZM1737.5,445.3L1740.1,445.0L1739.6,446.3ZM1781.5,582.1L1784.1,582.7L1783.6,585.4L1782.0,584.7ZM1761.3,581.1L1762.6,581.4L1762.6,584.1L1761.3,583.7ZM1909.0,547.5L1910.6,547.4L1913.1,551.1L1916.2,552.4L1918.2,556.5L1919.8,559.9L1919.8,562.8L1922.3,563.8L1922.8,560.6L1925.4,562.5L1926.9,568.0L1932.6,570.2L1936.2,567.3L1939.0,568.3L1938.0,572.8L1936.2,574.8L1935.6,578.1L1931.0,577.8L1930.5,580.1L1931.6,581.1L1929.0,586.8L1925.9,591.2L1922.3,594.2L1919.8,592.2L1920.8,589.1L1921.8,585.4L1921.1,583.1L1917.2,580.7L1914.4,578.6L1915.9,577.1L1918.8,574.8L1919.8,570.7L1919.8,567.0L1918.5,564.1L1916.7,559.9L1914.7,556.8L1912.6,554.2L1911.1,552.1L1910.0,549.9ZM1909.0,586.8L1910.8,587.1L1909.5,588.8L1910.6,590.8L1912.1,592.0L1914.7,590.1L1917.2,590.1L1917.1,595.1L1914.1,599.9L1912.1,603.2L1909.3,606.0L1911.1,609.6L1907.0,610.3L1901.6,613.8L1900.3,618.9L1899.0,624.4L1894.2,628.8L1890.1,630.3L1886.8,630.1L1882.4,627.3L1877.8,626.6L1877.0,624.0L1879.3,619.6L1883.9,615.3L1888.0,611.0L1890.1,609.9L1895.2,606.0L1900.1,602.0L1901.3,600.1L1902.6,595.3L1906.0,591.8L1906.5,588.4ZM1882.4,631.8L1886.0,631.4L1885.5,634.4L1882.9,634.8ZM119.3,609.2L122.7,609.2L122.1,611.7L120.1,611.0ZM1874.7,660.5L1876.3,660.5L1875.7,663.3ZM180.5,24.6L185.1,21.4L189.2,23.2L186.1,25.0ZM165.2,35.9L170.8,29.8L173.9,30.7L168.7,35.9ZM159.5,39.7L164.6,34.1L165.4,35.9L160.5,40.1ZM128.8,46.8L133.4,43.9L133.9,45.6ZM118.6,49.3L121.1,47.3L121.6,49.3ZM112.9,49.3L115.0,47.7L115.0,49.7ZM1939.2,50.1L1943.3,51.8L1942.8,52.6ZM1932.1,47.3L1934.1,46.0L1933.9,48.1ZM1908.0,38.9L1912.6,38.4L1912.1,40.1ZM1873.2,17.9L1876.3,21.0L1877.8,23.7L1874.7,21.0ZM1776.9,105.0L1782.0,98.9L1786.7,97.4L1780.0,103.2ZM1769.2,109.3L1774.9,105.0L1771.8,109.3ZM1790.2,96.7L1795.4,92.3L1793.8,94.8ZM1803.0,87.1L1804.6,85.2L1804.1,87.1ZM1815.8,70.2L1819.4,67.1L1817.9,70.2ZM1819.9,62.3L1824.5,57.1L1824.0,59.9ZM1678.4,221.1L1680.2,218.8L1681.7,216.8L1679.9,219.7ZM1686.3,208.7L1688.9,207.3L1687.3,209.3ZM1686.3,173.7L1687.8,170.3L1687.1,173.1ZM1670.7,178.6L1673.0,177.1L1674.8,177.7L1673.0,179.2ZM1732.4,150.3L1734.2,147.0L1733.9,149.9ZM1498.9,300.3L1500.7,289.8L1501.5,294.6L1499.9,300.3ZM1497.9,305.5L1498.9,303.5L1498.9,305.5ZM1504.5,324.7L1505.8,322.6L1505.6,324.7ZM1765.2,290.9L1766.9,289.3L1766.2,291.1Z"/><path fill="none" stroke="#dcdddf" stroke-width="1.1" stroke-linejoin="round" d="M396.3,71.0L537.6,71.0L537.6,68.0L540.4,73.3L548.6,74.1L556.3,78.3L564.0,78.0L566.0,78.7M634.1,106.8L639.3,102.1L642.3,101.0L658.7,101.0L662.3,98.1L664.9,94.5L666.4,88.5L670.5,82.9L675.1,83.7L677.7,85.9L677.7,95.9L679.7,98.9L681.8,101.8M602.4,98.9L602.9,114.9L600.4,120.2L599.3,121.5M620.3,113.5L620.8,116.3M591.9,90.4L595.2,94.1M358.2,23.2L359.2,12.9L351.5,6.4L346.4,1.7L341.8,-6.8L333.6,-21.7M425.2,183.5L437.5,182.3L437.0,183.5L456.5,190.5L470.8,190.5L470.8,187.8L479.5,187.8L487.2,194.6L489.8,200.5L496.4,204.3L500.5,199.6L505.6,199.8L510.8,206.7L515.4,213.1L517.4,219.4L522.0,221.4L527.4,221.9M552.7,284.3L553.0,280.6L555.3,276.2L561.7,276.2L556.8,269.9L558.9,269.9L558.9,266.9L568.4,266.9L572.7,263.2M568.4,266.9L568.1,277.1L569.6,277.1M572.7,278.2L568.1,284.6L567.3,285.1L563.5,288.5M567.3,285.1L571.7,287.5L575.5,288.3L575.3,290.4M577.8,292.5L580.9,288.5L585.5,288.0L590.1,283.0L599.1,281.9M586.0,302.4L591.1,302.7L596.3,303.3M600.4,318.2L600.4,313.3L601.9,310.5M626.0,322.6L628.8,315.0M657.4,256.7L657.7,262.6L657.4,265.6M659.7,298.5L654.1,302.4L651.0,310.2L654.1,316.4L656.2,323.7L665.9,323.7L669.5,328.3L679.2,327.8L677.4,336.5L680.2,342.2L680.7,347.8L682.3,353.5M682.3,353.5L681.2,350.9L667.2,350.9L667.2,354.1L670.5,354.5L669.5,356.5L666.1,356.8L666.1,360.6L669.5,365.2L666.7,381.1M666.7,381.1L662.8,379.1L666.4,373.4L655.1,371.9L650.0,368.8L643.9,362.4L639.3,360.4L634.1,357.6L628.5,357.6L621.3,352.2M639.3,360.4L638.0,367.5L632.6,372.9L626.2,375.0L623.4,377.0L621.9,383.2L617.8,385.2L613.2,382.4L613.4,377.0M666.7,381.1L651.6,386.0L646.2,397.3L651.3,405.9L655.1,411.1L663.3,408.5L663.3,416.3L668.4,416.0L673.1,424.1L671.5,430.4L669.5,438.9L671.5,443.7L669.0,450.1L664.6,455.2M668.4,416.0L675.1,416.3L683.8,410.5L690.0,409.5L690.5,418.9L695.1,424.1L703.3,426.7L707.9,429.4L715.0,430.9L716.6,444.2L725.8,444.2L726.3,449.6L730.4,454.4L727.3,463.1L727.1,465.0L728.6,475.7L738.8,476.8L741.2,486.2L746.8,486.5L745.2,495.3L749.3,495.5L749.3,504.1L739.1,510.8L729.9,521.9L738.1,525.5L740.1,525.8L747.8,532.1L752.9,536.9L751.5,543.4M669.0,450.6L672.0,458.7L674.6,469.1L675.6,472.9L677.2,479.5L680.7,479.5L685.9,474.0L691.0,475.7L695.6,479.5L697.6,475.1L704.0,476.5L706.1,467.1L708.6,462.2L722.2,460.3L727.1,465.0M704.0,476.5L712.5,485.1L722.7,489.6L729.9,493.6L724.8,504.4L736.0,505.6L738.6,505.0L745.2,495.3M729.9,521.9L726.8,535.1L725.8,544.3M680.7,479.5L681.8,486.2L674.1,490.7L675.1,502.7L671.0,507.9L667.9,511.9L666.4,523.1L663.8,530.3L666.4,540.6L667.4,546.1L664.4,553.0L660.8,561.2L661.8,574.1L658.2,580.7L657.2,590.1L657.4,597.7L655.6,599.0L657.7,607.4L659.7,615.3L657.2,624.7L657.7,631.4L654.6,635.9L653.6,646.6L648.5,652.1L650.0,661.7L654.6,661.7L654.1,669.1L656.7,672.4L666.4,672.4L674.6,675.3M673.6,677.8L673.6,697.3M717.6,315.7L712.5,320.6L714.0,323.7L710.4,329.1L713.8,332.9L712.5,336.5L703.3,339.1L696.1,338.6L697.1,346.8L700.2,348.3L696.6,351.4L689.4,355.8L682.3,353.5M713.8,332.9L717.6,334.0L717.9,336.5L719.9,339.6L717.6,345.8L722.7,352.7L727.8,351.9L735.5,349.9L738.6,346.8L745.2,347.8L753.4,348.3L756.0,346.3L760.4,338.8M732.2,329.1L731.4,334.0L727.8,339.1L730.4,342.7L735.5,349.9M748.3,330.1L746.0,336.5L748.3,341.7L745.2,347.8M1013.5,167.5L1016.1,171.2L1015.6,180.4L1018.7,185.3L1006.4,188.3L1006.4,193.1L999.2,198.5L988.4,200.8L980.4,206.1L980.4,212.1L957.4,212.1M980.4,212.1L980.4,221.7L963.4,221.7L963.4,236.0L958.2,238.5L957.7,247.8L937.8,247.8M980.4,214.2L1000.1,227.3L991.5,227.3L996.6,279.3L977.2,279.3L970.0,279.8L965.9,278.7L962.3,283.2L956.2,276.1L950.6,273.1L942.9,273.9L940.3,276.4M962.3,283.2L966.4,295.6L954.7,294.3L939.3,295.9M954.7,294.3L954.7,299.3L948.0,303.2M938.8,290.6L947.5,288.3L954.1,289.8L947.5,291.4L939.0,292.2M1000.1,227.3L1030.7,249.0L1030.9,251.2L1041.2,256.1L1041.7,260.5L1046.6,259.7L1054.2,258.0L1063.2,250.4L1086.2,235.8L1076.0,230.2L1072.9,220.5L1075.5,216.5L1073.4,197.3L1070.9,185.9L1067.3,183.5L1063.2,174.9L1067.3,168.1L1067.3,158.6L1068.8,155.7M1073.4,197.3L1077.5,193.1L1077.5,188.3L1083.7,183.5L1083.7,179.5M1153.6,189.2L1151.3,197.9L1152.8,203.2L1152.8,244.1L1152.8,255.1L1147.7,255.1L1147.7,257.8L1106.7,236.0L1101.6,238.5L1097.5,240.8L1086.2,235.8M1152.8,244.1L1213.7,244.1M1097.5,240.8L1104.2,249.6L1104.7,255.1L1104.2,271.8L1093.9,284.6L1094.4,288.8L1088.8,291.9L1076.0,290.9L1065.8,290.9L1060.1,292.5L1053.0,287.7L1045.8,289.8L1043.2,299.3M1147.7,257.8L1147.7,278.2L1142.0,278.7L1139.5,287.2L1138.0,294.0L1142.0,302.9L1146.1,308.7L1152.8,306.6L1161.0,310.7L1168.2,311.8L1173.3,309.7L1178.4,309.4L1184.5,309.2L1190.7,299.3L1194.3,296.7L1194.8,304.5L1200.4,305.5M1046.6,259.7L1046.6,271.8L1042.7,279.8L1031.5,280.3L1025.8,282.2L1029.9,290.4L1037.1,297.7L1043.2,299.3M1025.8,282.2L1014.6,286.1L1007.4,291.4L1002.3,296.1L997.7,298.8L996.6,306.1L993.1,304.5L989.0,307.1L983.8,307.1L982.3,302.9L978.7,296.1L972.1,296.7L966.4,295.6M956.7,313.1L960.8,308.7L967.5,308.1L970.5,313.1L972.1,315.9L976.2,316.4L976.7,321.6L981.3,320.6L982.3,320.6L985.4,316.4L983.8,307.1M965.9,324.2L972.1,315.9M982.3,320.6L981.3,326.2L986.9,329.6L986.4,337.3M1010.5,333.5L1008.4,324.7L1012.0,317.5L1010.5,311.3L1010.5,302.9L1024.0,302.4L1029.4,302.9L1037.1,297.7M996.6,306.1L1000.7,309.7L1010.7,309.7M1030.9,328.3L1027.6,324.2L1027.9,317.5L1026.8,310.7L1024.0,302.4M1033.2,327.8L1033.0,313.3L1028.9,306.1L1029.4,302.9M1038.6,326.8L1038.9,313.3L1043.2,307.1L1043.2,299.3M1068.3,336.0L1071.9,328.8L1079.1,323.2L1085.2,323.7L1090.3,315.4L1095.5,302.9L1099.6,300.3L1097.5,295.6L1097.0,291.9L1094.4,288.8M1097.0,291.9L1101.6,297.2L1102.1,304.0L1104.2,308.1L1096.5,308.7L1102.6,321.1L1099.0,327.8L1100.1,336.0L1107.2,344.7L1107.7,348.3M1075.0,347.8L1082.7,348.3L1092.9,348.3L1107.7,348.3L1109.8,341.7L1120.0,341.7M1082.7,348.3L1082.7,354.5L1075.0,354.5M1092.9,348.3L1092.4,352.9L1099.0,355.0L1096.0,360.6L1099.0,362.7L1098.5,369.3L1091.4,371.9L1084.2,371.9L1085.7,378.0L1081.6,379.8M1120.0,341.7L1117.5,348.3L1115.9,358.1L1107.7,370.9L1106.2,379.6L1102.6,381.6L1098.5,384.7L1093.4,384.2L1090.3,382.2L1086.2,385.2M1087.8,390.4L1093.4,389.9L1109.8,389.9L1111.3,396.6L1124.1,395.5L1124.6,400.7L1136.4,397.1L1136.9,408.5L1139.0,416.3L1147.7,416.3L1147.7,426.7L1137.4,426.7L1137.4,443.7L1144.6,451.2M1085.0,449.3L1093.9,447.9L1097.5,450.1L1119.0,450.1L1134.4,453.3L1144.6,451.2L1154.3,452.2M1132.3,454.9L1132.3,475.1L1127.2,475.1L1127.2,490.7L1127.2,511.4L1122.1,514.3L1113.9,513.1L1109.0,512.7M1132.3,454.9L1144.1,453.3L1148.7,453.3L1154.3,452.2M1127.2,490.7L1130.8,502.1L1137.4,499.3L1142.6,493.6L1155.9,495.3L1162.5,486.2L1175.3,476.2L1185.1,477.3L1188.6,489.0L1188.4,497.3M1175.3,476.2L1166.6,466.9L1157.9,458.7L1154.3,452.2L1163.0,453.3L1172.8,442.6L1180.4,440.5L1185.1,442.6L1193.2,446.3L1193.8,453.3L1192.2,458.7L1193.8,464.1L1190.7,471.3L1185.1,477.3M1183.5,497.0L1188.1,496.7L1189.2,502.1L1185.1,505.0L1182.5,502.1L1183.5,497.0M1189.2,502.1L1193.2,502.4M1168.2,512.8L1171.7,512.5L1175.3,517.8L1173.8,520.2L1169.2,523.1L1165.1,521.3L1163.0,518.4L1168.2,512.8M1147.7,416.3L1149.7,418.4L1154.3,417.3L1157.9,421.0L1164.1,419.4L1170.2,424.1L1173.3,428.8L1177.4,428.8L1177.4,422.3L1170.2,421.0L1171.2,413.7L1171.2,407.4L1172.8,403.3L1182.2,401.7L1193.2,407.9L1195.3,415.2L1193.8,421.5L1192.2,429.9L1194.8,432.0L1179.4,437.0L1180.4,440.5M1194.8,432.0L1200.9,434.1L1202.0,438.9L1200.4,442.1L1205.5,448.5L1208.1,442.6L1208.6,436.8L1204.0,430.4L1202.0,428.8L1202.0,419.4L1203.7,419.2L1211.7,419.9L1218.8,417.8L1221.9,418.4L1231.8,413.5M1193.2,407.9L1198.9,408.5M1225.5,383.4L1217.8,377.5L1217.3,375.0L1198.9,364.7L1198.9,358.1L1201.4,354.0L1204.0,349.9L1200.9,340.6L1198.9,338.1M1198.9,364.7L1181.0,365.0L1182.8,371.4L1181.0,371.9L1182.5,376.5L1178.4,382.2L1175.3,382.4M1173.3,373.4L1181.0,371.9M1176.4,366.8L1181.0,365.0M1182.5,341.7L1182.0,347.3L1185.1,348.6L1179.4,355.0L1176.4,362.2L1176.4,366.8L1173.3,373.4L1174.3,377.0M1120.0,341.7L1120.0,337.3L1124.6,333.5L1130.3,337.0L1139.5,338.6L1142.0,335.0L1149.7,333.5L1154.3,334.0L1165.1,334.0L1170.2,337.6L1175.8,336.0L1182.5,341.7L1188.6,341.4L1193.8,339.6L1198.9,338.1L1208.6,336.0L1208.6,332.4L1205.5,331.9L1202.5,325.2L1193.8,319.5L1198.4,316.4L1199.4,310.7L1200.4,305.5L1204.0,299.3L1209.6,294.0L1211.7,285.6L1214.2,276.6L1222.4,265.9M1165.1,334.0L1160.0,325.7L1153.8,319.5L1148.7,314.9L1145.1,313.8L1146.1,308.7M1102.6,321.1L1109.3,320.1L1117.0,318.5L1122.1,313.3L1129.8,312.3L1135.9,305.5L1142.0,302.9M1211.7,285.6L1218.8,282.4L1224.5,284.0L1229.6,284.6L1235.7,290.9L1241.9,295.1L1245.5,294.0M1241.9,295.1L1238.8,299.8L1238.8,302.9L1244.4,303.2L1246.5,300.6M1244.4,303.2L1245.0,310.2L1250.1,313.3L1265.4,318.5L1270.6,318.5L1255.2,334.0L1245.0,336.0L1239.8,338.6L1239.3,339.4L1234.7,345.3L1234.7,364.0L1237.8,368.0M1208.6,336.0L1213.7,336.8L1219.9,341.2L1227.0,341.9L1233.7,338.1L1239.3,339.4M979.5,122.9L982.8,121.5L983.3,123.6L991.0,122.6L993.1,125.0L989.5,129.1L989.7,133.8L989.0,137.8L986.4,138.1L989.0,142.4L987.4,146.4L989.0,147.7L986.4,151.9L986.9,154.1M1015.6,112.8L1017.6,114.9L1021.2,116.0L1028.4,117.4L1032.2,118.1L1033.8,118.8L1040.9,119.3M1063.4,109.8L1064.2,107.2L1060.1,105.4L1060.6,100.3L1059.6,95.2L1060.9,94.5L1059.6,90.8L1056.3,92.6L1056.0,89.3L1060.6,83.3L1063.7,81.8L1063.7,78.0L1066.8,71.0L1059.1,69.4L1057.3,67.5L1054.5,66.7L1049.6,61.9L1046.0,63.3L1043.2,59.1L1037.9,54.4M1042.1,52.0L1046.8,52.0L1050.4,51.2L1054.5,53.8L1054.0,57.1L1055.5,57.1L1056.0,53.4L1055.3,48.5L1059.6,47.3L1060.9,44.8L1060.9,41.4L1061.7,36.3M1055.5,57.1L1057.3,60.3L1056.0,62.3L1058.1,64.7L1057.3,67.5M1054.5,66.7L1054.2,62.3L1056.0,62.3M1069.1,21.9L1073.2,22.8M1097.8,30.5L1098.5,35.9L1097.2,39.7L1099.6,41.8L1100.3,46.4L1099.6,48.5L1101.6,52.6L1100.6,56.1L1098.0,54.7L1092.4,58.7L1086.8,60.7L1088.8,63.9L1088.3,65.1L1095.5,72.8L1093.4,74.5L1090.1,78.0L1091.6,82.5L1087.3,81.4L1081.1,83.3L1078.3,82.2L1074.0,82.3L1068.8,81.0L1063.7,81.8M1074.0,82.3L1073.4,85.9L1078.3,87.1L1078.3,89.7M1060.9,94.5L1065.0,94.5L1068.1,90.4L1070.9,94.8L1072.4,90.0L1076.5,91.9L1078.3,89.7L1081.1,88.0L1087.0,85.9L1088.3,88.5L1094.9,89.9L1093.4,92.3L1094.4,95.2L1095.0,96.7M1094.9,89.9L1099.3,90.8L1104.9,88.5L1107.2,87.3L1109.3,83.3L1112.4,81.0L1112.6,78.7M1095.5,72.8L1100.1,74.1L1101.6,71.0L1107.2,72.9L1111.6,74.1L1112.6,78.7L1116.2,80.6L1121.1,80.3L1126.9,77.6L1129.8,74.5L1136.2,76.0L1138.2,75.7L1140.3,70.4M1100.6,56.1L1103.4,56.7L1108.5,57.9L1107.7,59.9L1110.3,62.3L1111.8,59.9L1115.4,60.7L1119.8,63.9L1121.3,66.9L1124.4,66.3L1127.7,69.4L1131.8,68.6L1137.4,67.9L1140.3,70.4L1141.0,66.3L1146.1,59.9L1148.2,56.3L1145.6,51.0L1145.9,46.0L1143.6,44.3L1147.2,41.0L1145.1,30.3L1141.5,26.7L1125.4,25.9M1111.6,74.1L1115.2,72.2L1117.7,70.2L1121.3,66.9M1141.5,26.7L1141.0,21.4L1133.9,18.8M1145.1,30.3L1149.7,30.7L1156.9,27.2L1156.4,21.9L1161.0,18.3L1161.0,14.7L1168.9,10.6L1167.4,-0.1L1164.8,-2.5L1166.6,-5.4L1165.1,-13.7L1168.2,-21.1M1132.6,11.3L1138.0,8.3L1148.2,9.7L1152.8,8.3L1161.0,14.7M1149.5,-5.6L1154.3,-7.3L1160.5,-2.5L1164.8,-2.5M1168.9,10.6L1179.4,13.3L1183.5,21.0L1182.5,22.8L1187.6,31.6L1192.2,34.6L1185.6,36.7L1187.6,46.0L1197.9,43.9L1200.9,48.9L1206.0,58.3L1216.5,59.9L1219.4,63.9L1230.1,66.3L1228.1,74.1L1229.1,79.9L1223.5,80.3L1220.6,85.6M1145.6,51.0L1152.8,47.7L1164.1,50.1L1174.3,51.8L1181.2,52.6L1183.3,46.4L1187.6,46.0M1138.2,75.7L1142.0,79.1L1137.4,82.5L1133.1,91.5L1128.5,93.0L1121.3,94.5L1115.2,94.8L1109.5,90.0L1107.2,87.3M1094.4,97.8L1099.6,96.3L1103.4,97.8L1105.2,92.3L1109.5,90.0M1105.7,99.6L1111.3,99.2L1117.0,100.3L1122.3,102.1L1123.9,106.4L1124.6,111.1L1121.6,112.8L1123.1,111.8L1129.0,116.3L1127.5,118.1L1125.4,118.1L1123.9,123.3M1105.7,99.6L1105.4,102.5L1107.5,106.8L1114.9,114.9L1119.3,118.4L1119.8,115.3L1121.6,112.8M1121.3,94.5L1122.3,98.1L1122.3,102.1M1125.4,118.1L1129.8,120.8L1130.0,123.3L1129.5,125.7L1131.3,129.7L1132.6,131.1L1130.5,135.1L1128.2,138.1M1129.8,120.8L1134.4,120.5L1139.2,120.2L1142.0,126.7L1136.9,128.4L1132.6,131.1M1129.0,116.3L1131.3,113.5L1136.4,117.7L1134.4,120.5M1139.2,120.2L1142.6,113.9L1139.2,109.6L1140.8,106.8L1140.0,103.2L1134.4,102.5L1134.9,99.6L1128.5,93.0M1140.8,106.8L1142.3,109.6L1155.4,110.7L1163.0,107.2L1171.2,110.0M1142.0,126.7L1150.2,125.3L1154.3,127.4L1159.7,124.3L1161.0,126.7L1158.2,130.8M1159.7,124.3L1164.6,121.5L1168.3,122.4M1142.0,79.1L1152.3,80.6L1161.0,76.8L1165.6,82.5L1168.7,89.3L1169.2,97.8L1176.9,99.6M1161.0,76.8L1165.6,75.3L1174.0,79.1L1176.4,90.8L1173.0,90.4L1169.2,97.8M986.9,21.0L983.3,25.4L987.4,28.5L992.5,28.9M1209.9,162.7L1212.4,160.2L1212.7,156.7L1219.4,156.4L1229.6,156.7L1241.6,154.8L1254.2,154.5L1251.1,146.4L1252.4,139.8L1254.2,137.8L1248.3,135.1L1248.8,131.1L1247.3,128.4L1242.4,126.0L1237.5,125.5M1229.6,112.5L1239.8,113.9L1249.1,118.1L1255.2,117.4L1262.4,123.3L1267.0,127.0L1269.5,127.7L1273.6,123.3M1262.4,123.3L1263.4,128.4L1255.2,127.0L1247.3,128.4M1255.2,127.0L1258.3,130.4L1260.3,134.5L1262.9,139.1L1262.9,143.1M1254.2,137.8L1262.9,143.1L1270.6,137.8L1272.4,139.8L1275.2,146.0M1254.2,154.5L1257.2,161.8L1262.1,163.1L1257.2,174.3L1260.3,180.4L1269.8,187.7L1269.0,192.8L1273.4,198.8M1241.6,154.8L1236.3,159.6L1236.8,164.3L1234.7,171.8L1223.5,178.2L1225.5,185.6L1231.6,186.8L1240.4,191.9L1253.7,203.2L1263.1,203.8L1267.7,198.5L1270.3,198.5M1263.1,203.8L1267.7,207.0L1272.8,207.1M1223.5,178.2L1213.2,184.7L1207.8,182.0M1209.0,170.3L1212.2,173.1L1208.4,178.0M1204.5,179.8L1208.4,178.0L1206.8,184.1L1206.3,189.5L1206.0,192.5L1204.0,201.1M1200.2,191.2L1203.5,201.4M1225.5,185.6L1214.2,189.5L1219.4,195.5L1216.8,198.5L1209.1,203.2L1203.7,202.3M1243.9,274.5L1246.0,269.4L1252.1,269.1L1262.1,270.2L1267.7,270.7L1271.6,265.1L1276.2,262.6L1291.0,260.5L1306.4,255.1L1309.7,244.1L1307.4,240.2L1294.1,238.8L1289.0,231.8M1307.4,240.2L1310.5,233.0L1311.5,227.6L1313.3,227.6M1291.0,260.5L1296.7,273.1M1284.9,228.7L1286.9,229.6M1300.8,153.2L1305.4,152.9L1311.5,148.3L1317.7,147.3L1323.8,151.2L1328.4,152.2L1334.0,157.7L1337.9,157.7L1338.4,164.3L1334.8,172.4L1336.6,177.4L1335.1,179.8L1336.4,189.5L1341.2,190.1L1340.7,193.7L1336.4,199.3L1341.2,206.4L1346.3,208.7L1346.3,214.5L1348.9,215.1L1348.4,217.9L1341.5,220.2L1340.2,226.2M1336.4,199.3L1344.8,202.0L1353.0,202.0L1364.3,199.0L1364.5,192.8L1371.9,190.1L1379.6,186.8L1380.6,180.1L1384.7,178.3L1382.7,174.0L1388.8,172.1L1391.6,165.6L1389.3,161.5L1396.3,156.7L1403.9,156.4L1408.3,153.8M1338.4,164.3L1343.8,167.1L1347.9,165.3L1355.0,159.9L1360.7,153.5L1365.3,153.2L1371.9,154.1L1377.6,153.5L1380.6,151.6L1384.0,151.9L1388.1,146.0L1390.1,147.3L1391.4,157.3L1400.1,152.5L1408.3,153.8M1365.3,153.2L1365.5,149.0L1353.5,142.8L1344.3,135.8L1341.7,128.4L1334.3,127.7L1332.5,123.6L1324.8,116.7L1320.7,120.8L1316.4,123.3L1316.9,127.4L1311.5,127.0L1311.5,101.0L1324.8,97.0L1337.6,105.7L1342.2,111.8L1357.1,110.4L1363.2,115.3L1362.7,122.2L1365.3,122.9L1373.2,128.4L1378.3,126.3L1388.1,120.5L1389.3,116.7L1401.1,119.1L1404.7,113.9L1422.6,116.0L1435.4,120.8M1311.5,127.0L1308.7,127.0L1305.1,121.9L1293.3,123.9M1435.4,120.8L1435.4,115.3L1438.5,114.2L1436.4,103.9L1433.9,101.8L1444.1,98.5L1447.2,97.4L1449.8,84.8L1462.6,85.9L1463.8,75.7L1472.0,70.2L1474.3,69.8M1472.0,70.2L1461.0,66.3L1451.8,55.1L1434.4,56.7L1423.6,35.9L1416.5,28.5L1400.6,34.6L1400.1,29.8L1389.3,28.9L1387.6,18.3L1378.1,17.4L1358.6,26.8L1337.1,30.3L1340.7,38.4L1336.6,42.7L1332.0,55.1L1339.2,56.7L1329.7,58.7L1314.1,54.7L1303.8,58.7L1292.6,48.9L1284.6,48.9L1274.1,58.3L1272.6,64.7L1262.9,75.7L1267.5,80.3L1271.6,81.0L1275.7,90.8M1435.4,120.8L1419.0,129.1L1415.7,133.5L1408.0,132.4L1402.7,137.1L1401.9,139.5L1402.7,145.1L1408.3,146.4L1408.3,153.8M1401.9,139.5L1392.4,140.5L1385.8,138.5L1379.6,138.8L1385.8,135.8L1386.8,133.8M1371.9,154.1L1375.0,147.7L1371.4,142.4L1375.5,138.8L1379.6,134.5L1385.2,132.4L1386.8,133.8L1388.3,134.1L1393.4,132.4L1399.1,130.1L1391.9,125.7L1385.2,125.7L1388.1,120.5M1374.0,234.6L1377.1,231.3L1383.2,231.8L1388.3,230.7L1386.3,223.4L1383.7,218.5L1380.6,215.9L1385.2,210.2L1392.9,210.5L1398.0,204.6L1400.6,198.8L1405.7,192.5L1406.8,187.1L1410.6,184.7L1405.5,180.4L1403.7,174.3L1408.8,170.3L1419.0,168.1L1423.1,165.0M1408.3,153.8L1413.2,157.7L1414.7,162.7L1423.1,165.0L1428.8,172.4L1429.3,180.4L1431.8,183.5L1428.0,186.5L1428.0,190.7L1432.4,192.8L1439.5,197.3L1445.2,196.7L1455.4,203.2L1464.1,208.1L1476.1,211.0L1479.5,209.9L1480.0,214.2M1439.5,197.3L1434.9,205.5L1440.5,208.1L1451.3,213.9L1458.2,214.2L1464.1,218.2L1475.9,219.1L1476.1,211.0M1480.0,214.2L1480.5,217.4L1495.8,216.8L1496.4,213.1L1493.8,211.3L1487.6,209.6L1483.0,209.6L1480.0,214.2M1496.4,213.1L1498.9,211.0L1504.0,206.1L1513.2,204.3L1517.1,202.0L1519.4,205.5L1523.2,208.7M1523.2,208.7L1520.9,213.1L1522.2,215.4L1517.1,214.5L1512.0,221.4L1509.2,226.2L1509.9,227.3L1506.8,233.8L1502.8,232.7L1503.0,238.0L1501.5,243.0L1498.9,244.2L1498.9,247.9L1497.4,250.4M1480.7,243.5L1480.2,237.4L1478.2,234.9L1479.2,231.3L1475.9,229.3L1475.9,222.8L1477.7,219.4L1482.3,221.7L1484.8,225.6L1497.9,227.3L1496.9,231.3L1491.5,232.4L1491.5,235.2L1493.0,238.5L1494.8,236.9L1497.4,238.0L1498.9,244.2M1523.2,208.7L1527.3,211.6L1530.1,212.8L1530.1,222.2L1524.3,228.7L1524.3,233.2L1531.2,237.4L1534.2,239.1L1532.4,243.3L1537.8,247.1L1542.7,246.6L1537.3,253.1M1537.3,253.1L1531.7,256.1L1525.5,257.2L1523.2,262.9L1529.9,275.0L1527.6,281.4L1532.4,288.8L1535.0,298.8L1530.4,306.3L1529.6,308.4M1537.3,253.1L1539.6,254.2L1539.6,257.8L1543.2,257.5L1541.9,265.9L1542.7,268.6L1547.6,264.8L1550.6,266.7L1554.2,263.7L1557.3,264.3L1561.1,268.6L1561.1,274.2L1565.2,277.9L1565.2,284.3L1563.4,285.3L1552.2,285.9L1549.9,289.3L1548.8,289.6L1551.6,299.0M1537.3,326.5L1541.7,330.1L1542.4,330.6L1544.7,329.3L1547.6,327.5M1547.8,241.9L1551.6,245.7L1560.4,251.5L1557.8,256.7L1563.4,262.1L1563.4,264.3L1570.3,271.5L1574.9,279.3L1575.7,283.5L1575.7,296.1L1566.8,299.8L1568.5,304.0L1562.9,303.2L1559.6,306.0M1542.7,246.6L1545.8,248.8L1545.8,241.3L1547.8,241.9L1557.0,241.3L1564.2,236.9L1571.1,239.4L1570.3,242.2L1574.4,246.3L1577.8,246.8M1563.4,285.3L1567.8,287.2L1575.7,283.5M1586.2,348.9L1585.7,354.5L1590.8,355.2L1597.5,354.5L1599.3,352.2L1606.7,353.2L1611.3,352.2L1612.8,349.4L1614.1,345.0L1616.4,343.5L1616.7,338.1L1626.9,338.3M1609.0,336.0L1612.6,339.1L1615.1,337.0L1614.4,334.5M1746.7,372.9L1746.7,406.5M1664.5,405.6L1665.3,407.9M1474.3,69.8L1480.0,78.0L1490.2,86.7L1490.7,99.6L1503.8,101.4L1513.2,106.4L1518.1,117.0L1536.8,117.7L1546.0,118.8L1562.1,124.6L1575.2,119.1L1590.0,117.7L1598.0,110.4L1595.2,105.7L1597.5,100.7L1606.4,102.9L1618.2,95.9L1621.8,91.5L1625.9,89.3L1638.7,88.5L1631.8,79.1L1627.9,78.7L1616.2,79.5L1617.7,74.9L1622.3,64.3M1474.3,69.8L1484.1,63.9L1498.4,56.7L1507.6,58.7L1523.0,65.1L1528.1,59.1L1531.2,46.0L1548.1,52.6L1548.6,58.3L1564.4,59.5L1572.6,61.5L1580.8,68.3L1591.6,69.8L1603.9,66.3L1610.0,61.1L1622.3,64.3L1627.9,67.1L1635.6,60.3L1639.7,49.7L1642.8,42.2L1639.5,40.5L1643.8,35.9L1657.6,33.7L1667.9,38.0L1677.6,64.7L1693.5,72.2L1695.3,81.0L1703.2,81.0L1714.7,76.0L1706.3,100.3L1699.9,98.9L1695.5,102.1L1697.1,112.1L1693.7,119.3L1689.9,115.6L1680.4,122.2L1681.7,125.3L1674.5,123.9L1661.5,136.1M1670.4,150.6L1673.5,149.3L1675.6,147.0L1682.0,145.1"/><path fill="#d5dadd" stroke="#e3e5e7" stroke-width="0.6" d="M538.4,-29.8L542.5,-14.4L548.6,-6.8L551.2,1.7L558.9,-0.1L566.6,3.6L576.3,12.0L587.6,18.3L597.3,18.8L603.4,19.7L603.9,28.1L603.4,36.7L607.0,43.5L611.1,50.1L613.7,52.6L617.2,53.4L620.3,51.0L622.4,44.8L621.3,38.4L620.3,31.6L616.7,24.1L621.3,21.0L626.7,18.5L632.1,11.0L632.9,4.6L631.1,-3.0L624.9,-11.2L625.4,-29.8ZM553.2,88.2L557.9,87.1L562.0,89.3L569.1,87.1L572.2,84.0L576.3,83.3L575.8,87.1L581.9,90.0L589.6,88.5L591.9,90.4L591.1,84.0L585.5,79.1L582.4,72.9L573.2,71.8L567.6,78.0L560.9,82.5ZM576.3,124.6L579.4,124.6L582.9,118.1L582.2,109.6L584.0,103.2L587.0,99.6L589.6,95.6L586.0,94.1L580.9,95.2L576.3,100.3L574.2,103.9L576.8,106.1L575.3,113.9ZM591.1,94.8L595.2,94.1L602.4,94.1L608.5,94.5L613.7,98.1L616.2,102.1L612.6,104.6L608.5,103.2L606.5,111.1L602.9,114.9L601.9,108.9L597.8,108.6L595.2,110.7L597.8,101.8L594.7,97.4ZM597.8,124.3L602.4,126.3L607.5,125.0L615.2,121.5L620.8,116.3L617.8,116.3L613.2,118.1L607.0,118.8L602.4,122.2L599.3,121.5ZM616.2,113.2L620.3,113.5L628.0,113.5L634.1,111.8L634.7,107.5L630.6,108.6L623.9,108.6L618.8,110.7ZM666.4,439.9L669.5,438.9L672.5,443.1L672.0,445.3L668.4,443.7ZM1173.8,127.7L1168.7,124.8L1168.3,123.1L1165.6,118.8L1167.8,113.9L1170.6,112.7L1171.5,107.0L1176.9,100.0L1179.4,94.8L1182.2,90.3L1186.3,89.3L1190.2,90.0L1193.2,93.0L1196.8,93.0L1193.8,95.9L1191.2,98.5L1195.7,99.6L1196.5,103.9L1197.5,105.5L1199.8,104.6L1205.9,100.8L1211.5,98.5L1205.5,98.1L1203.5,93.7L1205.0,90.8L1213.2,88.2L1217.1,85.6L1224.0,84.8L1226.0,85.6L1220.7,88.5L1220.1,93.4L1216.2,98.5L1212.7,99.6L1215.8,101.8L1218.3,103.1L1224.8,107.5L1228.2,111.2L1234.8,115.3L1238.0,121.2L1237.9,124.6L1232.7,128.7L1228.2,129.1L1221.4,129.6L1215.3,128.4L1210.8,127.2L1204.8,122.1L1197.7,122.4L1191.7,123.6L1187.6,126.0L1185.6,127.2L1179.9,128.0L1176.4,127.9ZM1163.0,131.4L1165.6,129.3L1169.2,128.7L1173.2,129.1L1177.9,130.8L1174.0,132.9L1168.0,133.1L1164.6,132.8ZM1268.0,115.3L1263.9,106.8L1265.4,102.5L1267.0,97.4L1270.6,94.5L1275.7,90.8L1280.8,89.3L1285.9,87.1L1291.0,87.8L1296.2,88.5L1296.7,93.0L1296.2,98.9L1288.5,98.9L1285.9,103.9L1282.3,104.6L1285.4,108.2L1287.5,113.9L1291.0,116.7L1294.1,124.3L1300.8,123.6L1302.8,127.7L1296.2,131.1L1295.1,135.8L1298.7,139.1L1297.2,144.4L1300.8,153.5L1300.8,156.1L1293.6,157.3L1285.9,157.0L1280.8,152.9L1275.7,151.6L1275.2,146.4L1277.2,140.5L1278.2,134.5L1282.3,133.1L1278.2,131.8L1274.7,124.3L1270.6,118.1ZM1323.3,94.5L1326.4,93.7L1325.9,102.5L1323.8,106.1L1322.8,101.0ZM1328.4,96.7L1331.0,94.5L1332.5,89.3L1336.1,88.5L1333.0,93.7L1330.5,99.6ZM1187.1,363.2L1188.6,358.6L1194.8,357.6L1199.4,358.6L1199.9,362.7L1196.8,369.3L1193.8,372.9L1190.2,372.4L1187.6,368.3ZM1174.3,377.0L1176.4,377.0L1177.4,385.2L1181.5,394.5L1184.5,403.8L1181.0,403.3L1176.9,395.0L1174.3,387.8ZM1198.4,408.5L1201.4,409.0L1203.5,418.9L1203.5,428.3L1205.5,434.1L1202.0,433.1L1200.4,424.1L1199.4,416.3Z"/></g></defs><use href="#w"/><use href="#w" x="-1843.2"/><use href="#w" x="1843.2"/><circle cx="1038.7" cy="71.6" r="45" fill="#3b78a5" fill-opacity="0.88" stroke="#fff" stroke-opacity=".55" stroke-width="1"/><circle cx="507.5" cy="154.8" r="9.1" fill="#3b78a5" fill-opacity="0.88" stroke="#fff" stroke-opacity=".55" stroke-width="1"/></svg>
<div class="abs" style="left:564px;top:0;width:2px;height:720px;background:#fff"></div>
<div class="abs" style="left:16px;top:18px;width:52px;height:96px;border-radius:10px;background:rgba(60,64,67,.38)"></div>
<div class="abs" style="left:26px;top:28px;width:34px;height:34px;border-radius:7px;background:#e8e9ea"></div>
<div class="abs" style="left:26px;top:70px;width:34px;height:36px;border-radius:7px;background:#e8e9ea"></div>
<div class="abs" style="left:34px;top:41.5px;width:16px;height:5px;background:#000"></div>
<div class="abs" style="left:39.5px;top:36px;width:5px;height:16px;background:#000"></div>
<div class="abs" style="left:34px;top:85px;width:16px;height:5.5px;background:#000"></div>
<div class="abs" style="left:16px;top:132px;width:52px;height:52px;border-radius:10px;background:rgba(60,64,67,.38)"></div>
<div class="abs" style="left:26px;top:142px;width:34px;height:34px;border-radius:7px;background:#e8e9ea"></div>
<svg class="abs" style="left:26px;top:142px" width="34" height="34" viewBox="0 0 34 34"><circle cx="15.9" cy="16" r="9.5" fill="none" stroke="#2b2b2b" stroke-width="2.6"/><circle cx="15.9" cy="16" r="4.9" fill="#2b2b2b"/><path d="M15.9 2 V6.5 M15.9 25.5 V30 M1.9 16 H6.4 M25.4 16 H29.9" stroke="#2b2b2b" stroke-width="4"/></svg>
</div>
</body></html>
